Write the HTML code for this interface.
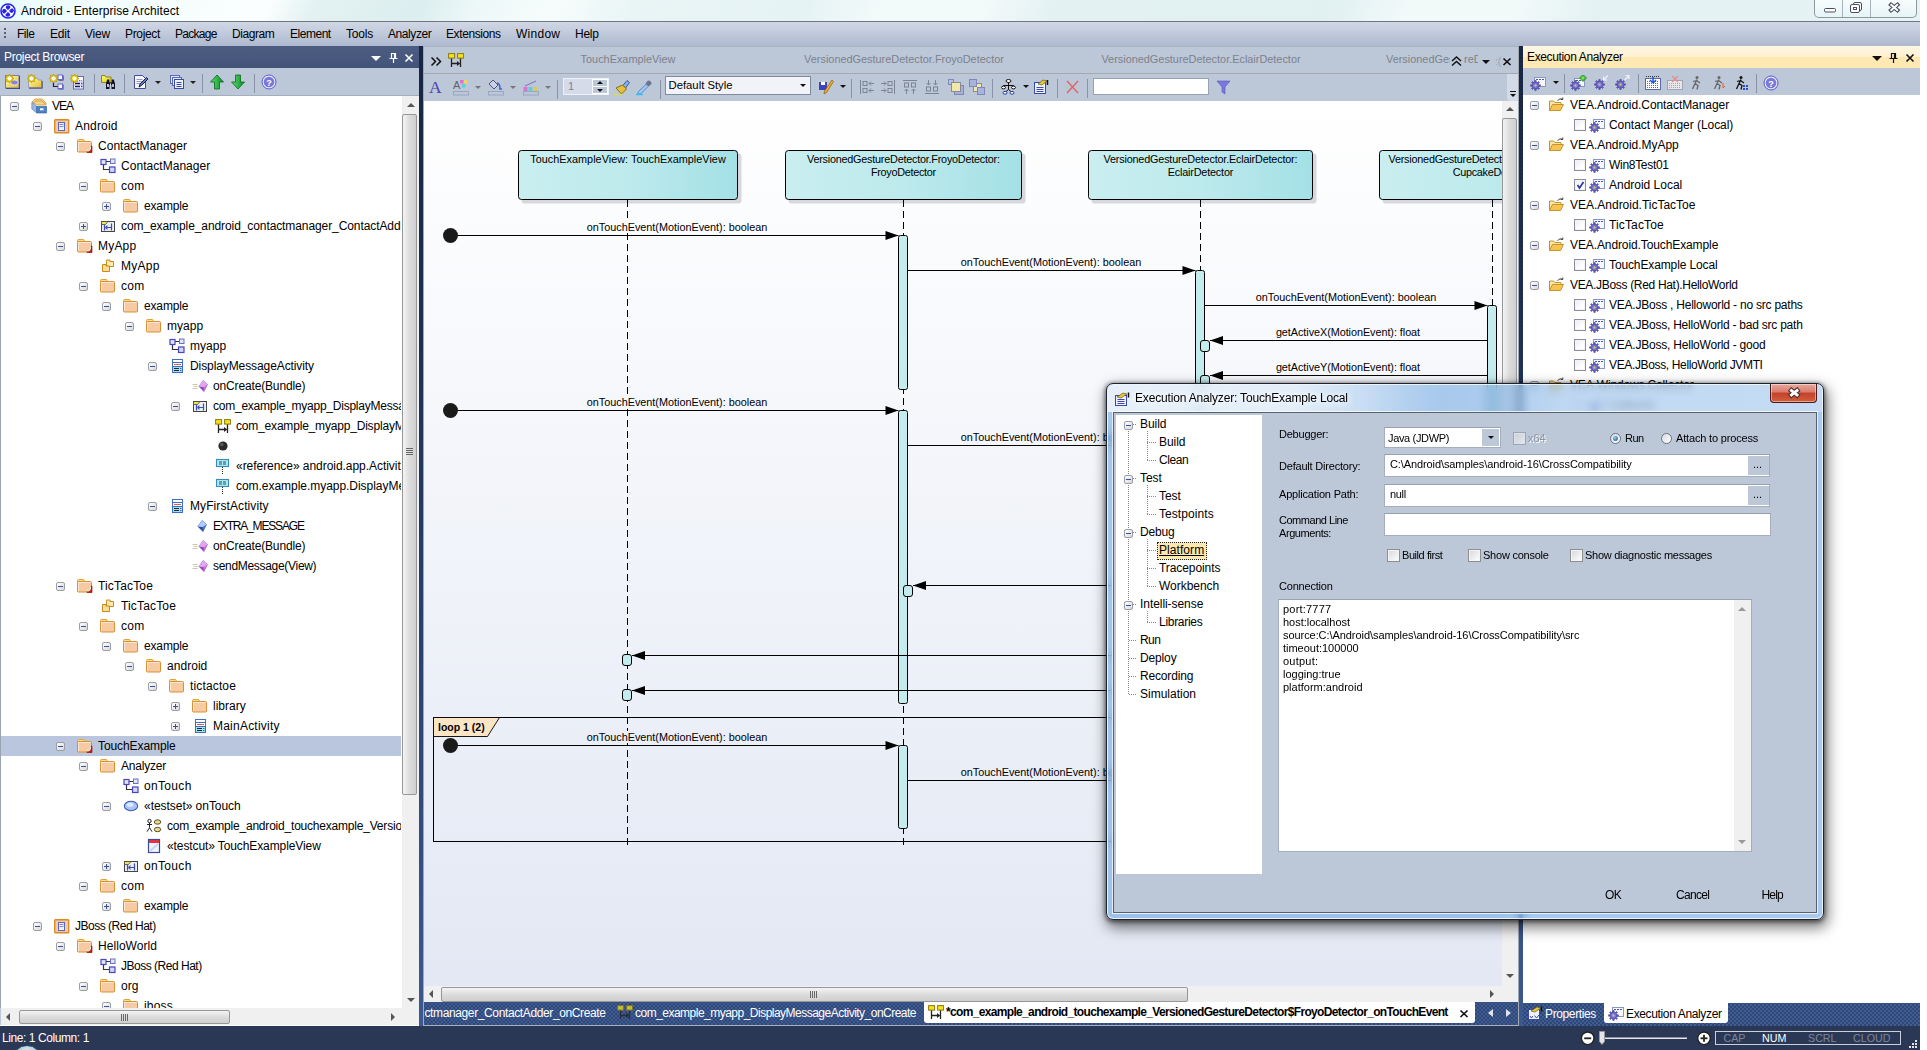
<!DOCTYPE html>
<html><head><meta charset="utf-8"><title>Android - Enterprise Architect</title>
<style>
*{box-sizing:border-box;margin:0;padding:0}
html,body{width:1927px;height:1050px;overflow:hidden;background:#fff}
body{font-family:"Liberation Sans",sans-serif;font-size:12px;color:#000}
#app{position:absolute;left:0;top:0;width:1920px;height:1050px;overflow:hidden;background:#bcc7d8}
.abs{position:absolute}
svg{display:block}
/* title */
#title{position:absolute;left:0;top:0;width:1920px;height:22px;border-bottom:1px solid #6f7680;
 background:linear-gradient(115deg,#e9fbfc 0,#f3fdfd 6%,#fbfefe 14%,#e3f1f2 16.500%,#dceeef 22%,#eef8f8 25%,#f6fcfc 29%,#e9f5f5 33%,#e6f3f4 42%,#f3fafa 46%,#f3fafa 51%,#e3f1f2 55%,#e1f0f1 69%,#f1f9f9 73%,#f1f9f9 79%,#e4f2f3 83%,#e6f3f4 100%)}
#title .appicon{position:absolute;left:0;top:3px;width:16px;height:16px}
#title .ttext{position:absolute;left:21px;top:4px;font-size:12px;line-height:15px;white-space:nowrap;letter-spacing:.07px}
.winbtns{position:absolute;left:1814px;top:-1px;height:19px;width:103px;border:1px solid #8f979f;border-top:0;border-radius:0 0 5px 5px;background:linear-gradient(#f8fdfd,#e6f4f6);display:flex}
.wb{height:18px;border-right:1px solid #a9b0b8;position:relative;display:block}
/* menu */
#menu{position:absolute;left:0;top:22px;width:1920px;height:24px;background:linear-gradient(#d0d7e5 0,#c3ccdd 40%,#aeb9cf 100%)}
#menu .mi{position:absolute;top:5px;font-size:12px;line-height:14px;white-space:nowrap}
#menu .grip{position:absolute;left:4px;top:6px;width:2px;height:11px;background:repeating-linear-gradient(#5a6070 0 2px,transparent 2px 4px)}
/* generic */
.tb{position:absolute;background:#bcc7d8}
.tree{position:absolute;background:#fff;overflow:hidden}
.row{position:absolute;left:0;height:20px;white-space:nowrap}
.row .t{position:absolute;top:2px;line-height:16px;font-size:12px;white-space:nowrap}
.row .ic{position:absolute;top:2px;width:16px;height:16px}
.exp{position:absolute;top:6px;width:9px;height:9px;border:1px solid #9a9ea6;border-radius:2px;background:linear-gradient(135deg,#fff,#d8d8d8)}
.exp:before{content:"";position:absolute;left:1px;top:3px;width:5px;height:1px;background:#3b4fa0}
.exp.p:after{content:"";position:absolute;left:3px;top:1px;width:1px;height:5px;background:#3b4fa0}
.split{position:absolute;background-color:#1f3052;background-image:radial-gradient(rgba(70,104,160,.5) .5px,transparent .75px),radial-gradient(rgba(70,104,160,.5) .5px,transparent .75px),linear-gradient(#16233f 0,#1c2d50 30%,#2a4270 65%,#3c598e 100%);background-size:4px 4px,4px 4px,100% 100%;background-position:0 0,2px 2px,0 0}
/* status */
#status{position:absolute;left:0;top:1026px;width:1920px;height:24px;overflow:hidden;background:#2a3856;color:#fff}
#status .sttext{position:absolute;left:2px;top:5px;font-size:12px;line-height:14px;white-space:nowrap}
.zoomctl{position:absolute;left:1578px;top:1px;width:130px;height:22px}
.kbd{position:absolute;left:1715px;top:5px;width:186px;height:14px;border:1px solid #c8d0e0;color:#7d8699;font-size:10.7px}
.kbd span{position:absolute;top:0;line-height:12px}
.sizegrip{position:absolute;left:1909px;top:14px;width:8px;height:8px;background:linear-gradient(#e4e4e4,#e4e4e4) 6px 0/2px 2px no-repeat,linear-gradient(#e4e4e4,#e4e4e4) 3px 3px/2px 2px no-repeat,linear-gradient(#e4e4e4,#e4e4e4) 6px 3px/2px 2px no-repeat,linear-gradient(#e4e4e4,#e4e4e4) 0 6px/2px 2px no-repeat,linear-gradient(#e4e4e4,#e4e4e4) 3px 6px/2px 2px no-repeat,linear-gradient(#e4e4e4,#e4e4e4) 6px 6px/2px 2px no-repeat}
/* scrollbars */
.sbv{position:absolute;width:17px;background:#f0f0f0}
.sbh{position:absolute;height:17px;background:#f0f0f0}
.thumb{position:absolute;border:1px solid #979797;border-radius:2px}
.thumb.v{background:linear-gradient(90deg,#f4f4f4,#dcdcdc 50%,#cfcfcf)}
.thumb.h{background:linear-gradient(#f4f4f4,#dcdcdc 50%,#cfcfcf)}
.arr{position:absolute;width:0;height:0;border:4px solid transparent}
.arr.u{border-bottom:4px solid #555;border-top:0}
.arr.d{border-top:4px solid #555;border-bottom:0}
.arr.l{border-right:4px solid #555;border-left:0}
.arr.r{border-left:4px solid #555;border-right:0}
.tabbar{background-color:#405d92;background-image:radial-gradient(#223666 .6px,transparent .85px),radial-gradient(#223666 .6px,transparent .85px);background-size:4px 4px;background-position:0 0,2px 2px}
.cb{position:absolute;top:4px;width:13px;height:13px;border:1px solid #8e8f8f;background:linear-gradient(135deg,#d4d8dc,#fff);box-shadow:inset 0 0 0 1px #f4f4f4}
.dl{font-size:11px;line-height:13px;white-space:nowrap}
.dt{font-size:12px;line-height:14px;white-space:nowrap}
.inp{background:#fff;border:1px solid #a6aebb;border-top-color:#97a1b1}
.hdot{height:1px;background:repeating-linear-gradient(90deg,#888 0 1px,transparent 1px 2px)}
.vdot{width:1px;background:repeating-linear-gradient(#888 0 1px,transparent 1px 2px)}
.dframe{border-radius:7px;border:1px solid #1c232d;background:rgba(110,166,226,.6);-webkit-backdrop-filter:blur(4px);backdrop-filter:blur(4px);box-shadow:0 0 0 1px rgba(255,255,255,.8) inset,0 1px 4px 1px rgba(0,0,0,.5),2px 6px 14px 2px rgba(0,0,0,.5)}
.dtitle{background:linear-gradient(90deg,rgba(255,255,255,.3) 0,rgba(255,255,255,.22) 30%,rgba(255,255,255,.05) 42%,rgba(255,255,255,.08) 55%,rgba(255,255,255,.3) 66%,rgba(255,255,255,.32) 100%);border-radius:5px 5px 0 0}
.dglow{background:linear-gradient(90deg,rgba(255,255,255,.62) 0,rgba(255,255,255,.6) 55%,rgba(255,255,255,0) 100%);border-radius:5px 0 0 0}
.dclose{border:1px solid #4a1a1a;border-top:0;border-radius:0 0 4px 4px;background:linear-gradient(#e9a99c 0,#d97b6c 45%,#c4402a 50%,#d2603c 100%);box-shadow:inset 0 0 0 1px rgba(255,255,255,.45)}

</style></head><body><div id="app">
<svg width="0" height="0" style="position:absolute"><defs><linearGradient id="yg" x1="0" y1="0" x2="1" y2="1"><stop offset="0" stop-color="#fffbd0"/><stop offset="1" stop-color="#e4c010"/></linearGradient><linearGradient id="yg2" x1="0" y1="0" x2="1" y2="1"><stop offset="0" stop-color="#fff870"/><stop offset="1" stop-color="#d8d020"/></linearGradient><linearGradient id="gg" x1="0" y1="0" x2="1" y2="0"><stop offset="0" stop-color="#5ae06a"/><stop offset="1" stop-color="#0a8a2a"/></linearGradient></defs></svg>
<div id="title"><div class="appicon"><svg width="16" height="16" viewBox="0 0 16 16"><circle cx="8" cy="8" r="7" fill="#fff" stroke="#2822ee" stroke-width="1.600"/><circle cx="8.100" cy="4.700" r="2.450" fill="#2822ee"/><circle cx="11.400" cy="7.600" r="2.450" fill="#2822ee"/><circle cx="4.600" cy="8.300" r="2.450" fill="#2822ee"/><circle cx="7.800" cy="11.400" r="2.450" fill="#2822ee"/><path d="M4.500 4.500 l7 7 M11.500 4.500 l-7 7" stroke="#fff" stroke-width="1.100"/></svg></div><span class="ttext">Android - Enterprise Architect</span>
<div class="winbtns"><span class="wb" style="width:28px"><svg width="28" height="18" viewBox="0 0 28 18"><rect x="9.500" y="9.500" width="11" height="3.500" rx="1.200" fill="#fff" stroke="#4a5060"/></svg></span><span class="wb" style="width:28px"><svg width="27" height="18" viewBox="0 0 27 18"><rect x="10.500" y="3.500" width="8" height="8" rx="1.500" fill="#fff" stroke="#4a5060"/><rect x="7.500" y="5.500" width="9" height="8" rx="1.500" fill="#fff" stroke="#4a5060"/><rect x="10.500" y="8.500" width="3" height="2" fill="none" stroke="#4a5060"/></svg></span><span class="wb" style="width:46px;border-right:0"><svg width="47" height="18" viewBox="0 0 47 18"><path d="M18.500 4.500 L28 12.500 M28 4.500 L18.500 12.500" fill="none" stroke="#4a5060" stroke-width="4.200"/><path d="M19.500 5.300 L27 11.700 M27 5.300 L19.500 11.700" fill="none" stroke="#fff" stroke-width="2"/></svg></span></div></div>
<div id="menu"><span class="grip"></span><span class="mi" style="left:17px;letter-spacing:-0.509px">File</span><span class="mi" style="left:50px;letter-spacing:-0.169px">Edit</span><span class="mi" style="left:85px;letter-spacing:-0.198px">View</span><span class="mi" style="left:125px;letter-spacing:-0.335px">Project</span><span class="mi" style="left:175px;letter-spacing:-0.714px">Package</span><span class="mi" style="left:232px;letter-spacing:-0.435px">Diagram</span><span class="mi" style="left:290px;letter-spacing:-0.475px">Element</span><span class="mi" style="left:346px;letter-spacing:-0.203px">Tools</span><span class="mi" style="left:388px;letter-spacing:-0.423px">Analyzer</span><span class="mi" style="left:446px;letter-spacing:-0.4px">Extensions</span><span class="mi" style="left:516px;letter-spacing:0.27px">Window</span><span class="mi" style="left:575px;letter-spacing:-0.245px">Help</span></div>

<div id="lp" class="abs" style="left:0;top:46px;width:419px;height:980px;background:#bcc7d8">
 <div class="abs" style="left:0;top:0;width:419px;height:22px;background:linear-gradient(#4d5d82,#43547a);color:#fff"><span class="abs" style="left:4px;top:4px;line-height:14px;letter-spacing:-.3px">Project Browser</span>
  <span class="abs" style="left:371px;top:10px;border:5px solid transparent;border-top:5px solid #fff;border-bottom:0"></span>
  <span class="abs" style="left:388.500px;top:5.500px"><svg width="9" height="12" viewBox="0 0 9 12"><path d="M2.500 1.500 h4 v5 h-4 z M5.500 1.500 v5 M.5 6.500 h8 M4.500 6.500 v4.500" fill="none" stroke="#fff" stroke-width="1.200"/></svg></span><span class="abs" style="left:403.500px;top:6.500px"><svg width="10" height="10" viewBox="0 0 10 10"><path d="M1.500 1.500 l7 7 M8.500 1.500 l-7 7" stroke="#fff" stroke-width="1.600"/></svg></span></div>
 <div class="abs" style="left:0;top:22px;width:419px;height:28px;border-bottom:1px solid #a3aebf"><span class="abs" style="left:5px;top:6px;width:16px;height:16px"><svg width="16" height="16" viewBox="0 0 16 16"><rect x="1" y="2" width="14" height="13" fill="#1a1a5a"/><rect x=".5" y="1.500" width="13.500" height="12.500" fill="url(#yg)" stroke="#7a74c0"/><ellipse cx="9.500" cy="8.500" rx="3.800" ry="2.500" fill="#8a84d8" stroke="#e8e8ff" stroke-width=".8"/><path d="M4.500 0 l1 2.100 l2.200 -.8 l-.8 2.200 l2.100 1 l-2.100 1 l.8 2.200 l-2.200 -.8 l-1 2.100 l-1 -2.100 l-2.200 .8 l.8 -2.200 l-2.100 -1 l2.100 -1 l-.8 -2.200 l2.200 .8 z" fill="#f4dc10" stroke="#b89800" stroke-width=".8"/><circle cx="4.500" cy="4.500" r="2" fill="#fffde8"/></svg></span><span class="abs" style="left:27px;top:6px;width:16px;height:16px"><svg width="16" height="16" viewBox="0 0 16 16"><path d="M2 14.500 v-7 h5.500 v-2.500 h3 l1.500 2 h3.500 v7.500 z" fill="#1a1a5a"/><path d="M1.500 13.500 v-7 h5.500 v-2.500 h3 l1.500 2 h3 v7.500 z" fill="url(#yg)" stroke="#8a84c0" stroke-width=".7"/><path d="M4.500 0 l1 2.100 l2.200 -.8 l-.8 2.200 l2.100 1 l-2.100 1 l.8 2.200 l-2.200 -.8 l-1 2.100 l-1 -2.100 l-2.200 .8 l.8 -2.200 l-2.100 -1 l2.100 -1 l-.8 -2.200 l2.200 .8 z" fill="#f4dc10" stroke="#b89800" stroke-width=".8"/><circle cx="4.500" cy="4.500" r="2" fill="#fffde8"/></svg></span><span class="abs" style="left:49px;top:6px;width:16px;height:16px"><svg width="16" height="16" viewBox="0 0 16 16"><path d="M4.500 8 v4.500 h6" fill="none" stroke="#1a1a5a" stroke-width="1.200"/><rect x="9.500" y="1.500" width="5" height="5" fill="#1a1a5a"/><rect x="9" y="1" width="4.500" height="4.500" fill="#f4f8ff" stroke="#6a68c8"/><rect x="9.500" y="10.500" width="5" height="5" fill="#2a3ac0"/><rect x="9" y="10" width="4.500" height="4.500" fill="#f4f8ff" stroke="#6a68c8"/><path d="M4.500 0 l1 2.100 l2.200 -.8 l-.8 2.200 l2.100 1 l-2.100 1 l.8 2.200 l-2.200 -.8 l-1 2.100 l-1 -2.100 l-2.200 .8 l.8 -2.200 l-2.100 -1 l2.100 -1 l-.8 -2.200 l2.200 .8 z" fill="#f4dc10" stroke="#b89800" stroke-width=".8"/><circle cx="4.500" cy="4.500" r="2" fill="#fffde8"/></svg></span><span class="abs" style="left:70px;top:6px;width:16px;height:16px"><svg width="16" height="16" viewBox="0 0 16 16"><rect x="3.500" y="2.500" width="10" height="12.500" fill="#f8f8ff" stroke="#6a68c0"/><path d="M9 6.500 h3.500" stroke="#3a68e0" stroke-width="1.200" stroke-dasharray="1 .7"/><path d="M5 9.500 h5 M5 12.500 h5" stroke="#1a1a5a" stroke-width="1.500"/><path d="M11 9.500 h1.500 M11 12.500 h1.500" stroke="#3a48c0" stroke-width="1.500"/><path d="M4 8 h9 M4 11 h9" stroke="#9a98d0" stroke-width=".6"/><path d="M4.500 0 l1 2.100 l2.200 -.8 l-.8 2.200 l2.100 1 l-2.100 1 l.8 2.200 l-2.200 -.8 l-1 2.100 l-1 -2.100 l-2.200 .8 l.8 -2.200 l-2.100 -1 l2.100 -1 l-.8 -2.200 l2.200 .8 z" fill="#f4dc10" stroke="#b89800" stroke-width=".8"/><circle cx="4.500" cy="4.500" r="2" fill="#fffde8"/></svg></span><span class="abs" style="left:94px;top:6px;width:1px;height:19px;background:#8a93a6"></span><span class="abs" style="left:101px;top:6px;width:16px;height:16px"><svg width="16" height="16" viewBox="0 0 16 16"><path d="M.5 8.500 v-7 h3.500 l1 1.500 h5 v5.500 z" fill="url(#yg2)" stroke="#8a8420"/><path d="M5 15 v-5.500 l1.200 -4 h2 l.3 3 h2 l.3 -3 h2 l1.200 4 v5.500 h-3.500 v-4 h-2 v4 z" fill="#12122a"/><path d="M6.200 10 h1.600 v3 h-1.600 z M11.200 10 h1.600 v3 h-1.600 z M9 9.500 h1 v1.500 h-1 z" fill="#e8e8f8"/></svg></span><span class="abs" style="left:124px;top:6px;width:1px;height:19px;background:#8a93a6"></span><span class="abs" style="left:133px;top:6px;width:16px;height:16px"><svg width="16" height="16" viewBox="0 0 16 16"><path d="M1.500 1.500 h8 l3 3 v10 h-11 z" fill="#f4f6ff" stroke="#4a4a98"/><path d="M3.500 5.500 h6 M3.500 7.500 h6 M3.500 9.500 h4" stroke="#7a80b8" stroke-width=".8"/><path d="M6 13 l1 -3 l6.500 -6.500 l1.500 1.500 l-6.500 6.500 z" fill="#5a78d8" stroke="#223"/></svg></span><span class="abs" style="left:155px;top:13px;border:3px solid transparent;border-top:3px solid #222;border-bottom:0"></span><span class="abs" style="left:169px;top:6px;width:16px;height:16px"><svg width="16" height="16" viewBox="0 0 16 16"><rect x="1.500" y="1.500" width="9" height="8" fill="#dfe6fa" stroke="#5a68b8"/><rect x="3.500" y="3.500" width="9" height="8" fill="#dfe6fa" stroke="#5a68b8"/><rect x="5.500" y="5.500" width="9" height="9" fill="#eef2ff" stroke="#3a48a8"/><path d="M7.500 8.500 h5 M7.500 10.500 h5 M7.500 12.500 h5" stroke="#3a48a8"/></svg></span><span class="abs" style="left:190px;top:13px;border:3px solid transparent;border-top:3px solid #222;border-bottom:0"></span><span class="abs" style="left:202px;top:6px;width:1px;height:19px;background:#8a93a6"></span><span class="abs" style="left:209px;top:6px;width:16px;height:16px"><svg width="16" height="16" viewBox="0 0 16 16"><path d="M8 1 l6.500 7 h-4 v7 h-5 v-7 h-4 z" fill="url(#gg)" stroke="#0a6a1a" stroke-width=".8"/></svg></span><span class="abs" style="left:230px;top:6px;width:16px;height:16px"><svg width="16" height="16" viewBox="0 0 16 16"><path d="M8 15 l6.500 -7 h-4 v-7 h-5 v7 h-4 z" fill="url(#gg)" stroke="#0a6a1a" stroke-width=".8"/></svg></span><span class="abs" style="left:254px;top:6px;width:1px;height:19px;background:#8a93a6"></span><span class="abs" style="left:261px;top:6px;width:16px;height:16px"><svg width="16" height="16" viewBox="0 0 16 16"><circle cx="8" cy="8" r="7" fill="#e8e8fc" stroke="#5a58d0" stroke-width="1"/><circle cx="8" cy="8" r="5.300" fill="#7a78d8"/><text x="8" y="11.500" font-size="9" font-weight="bold" text-anchor="middle" fill="#fff" font-family="Liberation Sans,sans-serif">?</text></svg></span></div>
 <div class="tree" style="left:0;top:50px;width:402px;height:912px;border-left:1px solid #9aa3b2"><div class="abs" style="left:0;top:0;width:400px;height:912px;overflow:hidden"><div class="row" style="top:0px;width:401px"><span class="exp" style="left:9px"></span><span class="ic" style="left:30px"><svg width="16" height="16" viewBox="0 0 16 16"><path d="M1 4 l3 -3 h7 l4 4 v2 h-9 z" fill="#f4d48a" stroke="#c99a3a" stroke-width=".8"/><path d="M2 5.500 l3 -2.500 h6 l3 3" fill="none" stroke="#c99a3a" stroke-width=".8"/><path d="M.8 4.500 l5 4 v6.500 l-5 -4 z" fill="#9db8dc" stroke="#4a78b8" stroke-width=".6"/><rect x="5.800" y="8.500" width="9.700" height="6.500" fill="#4a82c8" stroke="#2a5aa0" stroke-width=".6"/><rect x="9" y="10.300" width="3.500" height="2" fill="#fff"/></svg></span><span class="t" style="left:51px;letter-spacing:-1.004px">VEA</span></div><div class="row" style="top:20px;width:401px"><span class="exp" style="left:32px"></span><span class="ic" style="left:53px"><svg width="16" height="16" viewBox="0 0 16 16"><rect x=".7" y="1.700" width="14" height="13" rx=".8" fill="#f7c9a6" stroke="#d98a2b" stroke-width="1.400"/><rect x="4.500" y="4.500" width="6" height="8" fill="#eef0fa" stroke="#5a68b8"/><path d="M5.500 6.500 h4 M5.500 8.500 h4" stroke="#7a88c8"/></svg></span><span class="t" style="left:74px;letter-spacing:0.191px">Android</span></div><div class="row" style="top:40px;width:401px"><span class="exp" style="left:55px"></span><span class="ic" style="left:76px"><svg width="16" height="16" viewBox="0 0 16 16"><path d="M.5 4 v-1.500 q0 -1 1 -1 h4.500 q1 0 1.300 1 l.4 1.500 z" fill="#fbe08a" stroke="#d9a441"/><rect x=".5" y="3.500" width="14" height="10.500" rx="1" fill="#f6cba4" stroke="#d98f32"/><path d="M1.500 4.500 h12 M1.500 4.500 v8.500" stroke="#fbe6d2" fill="none"/><path d="M10 14.500 h5 v-6.500 h-1 v3 q0 2.500 -2.500 2.500 h-1.500 z" fill="#e01818" stroke="#8a0000" stroke-width=".6"/><path d="M10 13 q3.700 .2 3.700 -4.500" fill="none" stroke="#fff" stroke-width=".9"/></svg></span><span class="t" style="left:97px;letter-spacing:0.02px">ContactManager</span></div><div class="row" style="top:60px;width:401px"><span class="ic" style="left:99px"><svg width="16" height="16" viewBox="0 0 16 16"><path d="M3.500 6 v5.500 h6 M6 3.500 h5" fill="none" stroke="#333" stroke-width="1.200"/><rect x="1" y="1.500" width="5" height="5" fill="#dfe6fa" stroke="#4a44c0" stroke-width="1.200"/><rect x="10.500" y="1" width="4.500" height="4.500" fill="#dfe6fa" stroke="#6a70c0"/><rect x="9.500" y="9" width="5.500" height="5.500" fill="#cfd8f6" stroke="#4a44c0" stroke-width="1.200"/></svg></span><span class="t" style="left:120px;letter-spacing:0.042px">ContactManager</span></div><div class="row" style="top:80px;width:401px"><span class="exp" style="left:78px"></span><span class="ic" style="left:99px"><svg width="16" height="16" viewBox="0 0 16 16"><path d="M.5 4 v-1.500 q0 -1 1 -1 h4.500 q1 0 1.300 1 l.4 1.500 z" fill="#fbe08a" stroke="#d9a441"/><rect x=".5" y="3.500" width="14" height="10.500" rx="1" fill="#f6cba4" stroke="#d98f32"/><path d="M1.500 4.500 h12 M1.500 4.500 v8.500" stroke="#fbe6d2" fill="none"/></svg></span><span class="t" style="left:120px;letter-spacing:0.343px">com</span></div><div class="row" style="top:100px;width:401px"><span class="exp p" style="left:101px"></span><span class="ic" style="left:122px"><svg width="16" height="16" viewBox="0 0 16 16"><path d="M.5 4 v-1.500 q0 -1 1 -1 h4.500 q1 0 1.300 1 l.4 1.500 z" fill="#fbe08a" stroke="#d9a441"/><rect x=".5" y="3.500" width="14" height="10.500" rx="1" fill="#f6cba4" stroke="#d98f32"/><path d="M1.500 4.500 h12 M1.500 4.500 v8.500" stroke="#fbe6d2" fill="none"/></svg></span><span class="t" style="left:143px;letter-spacing:-0.151px">example</span></div><div class="row" style="top:120px;width:401px"><span class="exp p" style="left:78px"></span><span class="ic" style="left:99px"><svg width="16" height="16" viewBox="0 0 16 16"><rect x="1.500" y="3.500" width="13" height="10" fill="#eceef2" stroke="#444"/><path d="M1.500 3.500 h6.500 l-2.500 3 h-4 z" fill="#f0e45a" stroke="#444" stroke-width=".8"/><path d="M4.500 7 v5.500 M11.500 5.500 v7" stroke="#3a50b0" stroke-width="1.200"/><path d="M11 9.500 h-5.500 m0 0 l2 -1.800 m-2 1.800 l2 1.800" stroke="#3a50b0" fill="none" stroke-width="1.100"/></svg></span><span class="t" style="left:120px;letter-spacing:-0.089px">com_example_android_contactmanager_ContactAdd</span></div><div class="row" style="top:140px;width:401px"><span class="exp" style="left:55px"></span><span class="ic" style="left:76px"><svg width="16" height="16" viewBox="0 0 16 16"><path d="M.5 4 v-1.500 q0 -1 1 -1 h4.500 q1 0 1.300 1 l.4 1.500 z" fill="#fbe08a" stroke="#d9a441"/><rect x=".5" y="3.500" width="14" height="10.500" rx="1" fill="#f6cba4" stroke="#d98f32"/><path d="M1.500 4.500 h12 M1.500 4.500 v8.500" stroke="#fbe6d2" fill="none"/><path d="M10 14.500 h5 v-6.500 h-1 v3 q0 2.500 -2.500 2.500 h-1.500 z" fill="#e01818" stroke="#8a0000" stroke-width=".6"/><path d="M10 13 q3.700 .2 3.700 -4.500" fill="none" stroke="#fff" stroke-width=".9"/></svg></span><span class="t" style="left:97px;letter-spacing:0.19px">MyApp</span></div><div class="row" style="top:160px;width:401px"><span class="ic" style="left:99px"><svg width="16" height="16" viewBox="0 0 16 16"><path d="M6.500 3.500 v-1.500 h3.500 v1.500 h3.500 v5 h-7 z" fill="#fbe9b0" stroke="#c98a1a"/><path d="M2.500 8 v-1.500 h3.500 v1.500 h3.500 v5.500 h-7 z" fill="#f9dc98" stroke="#c98a1a"/></svg></span><span class="t" style="left:120px;letter-spacing:0.27px">MyApp</span></div><div class="row" style="top:180px;width:401px"><span class="exp" style="left:78px"></span><span class="ic" style="left:99px"><svg width="16" height="16" viewBox="0 0 16 16"><path d="M.5 4 v-1.500 q0 -1 1 -1 h4.500 q1 0 1.300 1 l.4 1.500 z" fill="#fbe08a" stroke="#d9a441"/><rect x=".5" y="3.500" width="14" height="10.500" rx="1" fill="#f6cba4" stroke="#d98f32"/><path d="M1.500 4.500 h12 M1.500 4.500 v8.500" stroke="#fbe6d2" fill="none"/></svg></span><span class="t" style="left:120px;letter-spacing:0.343px">com</span></div><div class="row" style="top:200px;width:401px"><span class="exp" style="left:101px"></span><span class="ic" style="left:122px"><svg width="16" height="16" viewBox="0 0 16 16"><path d="M.5 4 v-1.500 q0 -1 1 -1 h4.500 q1 0 1.300 1 l.4 1.500 z" fill="#fbe08a" stroke="#d9a441"/><rect x=".5" y="3.500" width="14" height="10.500" rx="1" fill="#f6cba4" stroke="#d98f32"/><path d="M1.500 4.500 h12 M1.500 4.500 v8.500" stroke="#fbe6d2" fill="none"/></svg></span><span class="t" style="left:143px;letter-spacing:-0.151px">example</span></div><div class="row" style="top:220px;width:401px"><span class="exp" style="left:124px"></span><span class="ic" style="left:145px"><svg width="16" height="16" viewBox="0 0 16 16"><path d="M.5 4 v-1.500 q0 -1 1 -1 h4.500 q1 0 1.300 1 l.4 1.500 z" fill="#fbe08a" stroke="#d9a441"/><rect x=".5" y="3.500" width="14" height="10.500" rx="1" fill="#f6cba4" stroke="#d98f32"/><path d="M1.500 4.500 h12 M1.500 4.500 v8.500" stroke="#fbe6d2" fill="none"/></svg></span><span class="t" style="left:166px;letter-spacing:0.056px">myapp</span></div><div class="row" style="top:240px;width:401px"><span class="ic" style="left:168px"><svg width="16" height="16" viewBox="0 0 16 16"><path d="M3.500 6 v5.500 h6 M6 3.500 h5" fill="none" stroke="#333" stroke-width="1.200"/><rect x="1" y="1.500" width="5" height="5" fill="#dfe6fa" stroke="#4a44c0" stroke-width="1.200"/><rect x="10.500" y="1" width="4.500" height="4.500" fill="#dfe6fa" stroke="#6a70c0"/><rect x="9.500" y="9" width="5.500" height="5.500" fill="#cfd8f6" stroke="#4a44c0" stroke-width="1.200"/></svg></span><span class="t" style="left:189px;letter-spacing:0.056px">myapp</span></div><div class="row" style="top:260px;width:401px"><span class="exp" style="left:147px"></span><span class="ic" style="left:168px"><svg width="16" height="16" viewBox="0 0 16 16"><rect x="3.500" y="1.500" width="10" height="13" fill="#fff" stroke="#3f6cc4"/><rect x="4" y="9" width="9" height="5" fill="#9fe6e8"/><path d="M3.500 4.500 h10 M3.500 8.500 h10" stroke="#3f6cc4"/><path d="M5 6.500 h7" stroke="#e05a5a"/><path d="M5 10.500 h5 M5 12.500 h5" stroke="#223" /><path d="M11 10.500 h1.500 M11 12.500 h1.500" stroke="#3f6cc4"/></svg></span><span class="t" style="left:189px;letter-spacing:-0.093px">DisplayMessageActivity</span></div><div class="row" style="top:280px;width:401px"><span class="ic" style="left:191px"><svg width="16" height="16" viewBox="0 0 16 16"><path d="M.5 6.500 h5 M1.500 8.500 h4 M.5 10.500 h5" stroke="#c8c0a0" stroke-width=".9"/><path d="M11 2.500 l4.500 4 l-3.500 7 l-5 -5 z" fill="#c878e0" stroke="#a050c0" stroke-width=".6"/><path d="M7 8.500 l5 5 l-.5 -4.500 z" fill="#9a48b8"/><path d="M11 2.500 l4.500 4 l-4 2.500 l-4.500 -.5 z" fill="#e0a8f0"/></svg></span><span class="t" style="left:212px;letter-spacing:-0.151px">onCreate(Bundle)</span></div><div class="row" style="top:300px;width:401px"><span class="exp" style="left:170px"></span><span class="ic" style="left:191px"><svg width="16" height="16" viewBox="0 0 16 16"><rect x="1.500" y="3.500" width="13" height="10" fill="#eceef2" stroke="#444"/><path d="M1.500 3.500 h6.500 l-2.500 3 h-4 z" fill="#f0e45a" stroke="#444" stroke-width=".8"/><path d="M4.500 7 v5.500 M11.500 5.500 v7" stroke="#3a50b0" stroke-width="1.200"/><path d="M11 9.500 h-5.500 m0 0 l2 -1.800 m-2 1.800 l2 1.800" stroke="#3a50b0" fill="none" stroke-width="1.100"/></svg></span><span class="t" style="left:212px;letter-spacing:-0.237px">com_example_myapp_DisplayMessageActivity</span></div><div class="row" style="top:320px;width:401px"><span class="ic" style="left:214px"><svg width="16" height="16" viewBox="0 0 16 16"><path d="M3.500 6 v9 M12.500 6 v9 M3.500 11.500 h8" fill="none" stroke="#222" stroke-width="1.300"/><path d="M12 11.500 l-3 -2.500 v5 z" fill="#222"/><rect x=".6" y="1.600" width="6" height="4.500" fill="#f4e21a" stroke="#8a7a10"/><rect x="9.600" y="1.600" width="6" height="4.500" fill="#f4e21a" stroke="#8a7a10"/></svg></span><span class="t" style="left:235px;letter-spacing:-0.189px">com_example_myapp_DisplayMessageActivity</span></div><div class="row" style="top:340px;width:401px"><span class="ic" style="left:214px"><svg width="16" height="16" viewBox="0 0 16 16"><circle cx="8" cy="8" r="4.600" fill="#2a2a2a"/><circle cx="6.800" cy="6.600" r="1.800" fill="#5a5a5a"/></svg></span><span class="t" style="left:235px;letter-spacing:-0.15px"></span></div><div class="row" style="top:360px;width:401px"><span class="ic" style="left:214px"><svg width="16" height="16" viewBox="0 0 16 16"><rect x="1.500" y="1.500" width="12" height="7" fill="#a8eef2" stroke="#3a88c0" stroke-width="1.100"/><path d="M4 4 h7 M4 6 h7" stroke="#234" stroke-width=".9" stroke-dasharray="3 1"/><path d="M7.500 9 v7" stroke="#333" stroke-dasharray="1 1"/></svg></span><span class="t" style="left:235px;letter-spacing:-0.045px">«reference» android.app.Activity</span></div><div class="row" style="top:380px;width:401px"><span class="ic" style="left:214px"><svg width="16" height="16" viewBox="0 0 16 16"><rect x="1.500" y="1.500" width="12" height="7" fill="#a8eef2" stroke="#3a88c0" stroke-width="1.100"/><path d="M4 4 h7 M4 6 h7" stroke="#234" stroke-width=".9" stroke-dasharray="3 1"/><path d="M7.500 9 v7" stroke="#333" stroke-dasharray="1 1"/></svg></span><span class="t" style="left:235px;letter-spacing:-0.038px">com.example.myapp.DisplayMessageActivity</span></div><div class="row" style="top:400px;width:401px"><span class="exp" style="left:147px"></span><span class="ic" style="left:168px"><svg width="16" height="16" viewBox="0 0 16 16"><rect x="3.500" y="1.500" width="10" height="13" fill="#fff" stroke="#3f6cc4"/><rect x="4" y="9" width="9" height="5" fill="#9fe6e8"/><path d="M3.500 4.500 h10 M3.500 8.500 h10" stroke="#3f6cc4"/><path d="M5 6.500 h7" stroke="#e05a5a"/><path d="M5 10.500 h5 M5 12.500 h5" stroke="#223" /><path d="M11 10.500 h1.500 M11 12.500 h1.500" stroke="#3f6cc4"/></svg></span><span class="t" style="left:189px;letter-spacing:0.092px">MyFirstActivity</span></div><div class="row" style="top:420px;width:401px"><span class="ic" style="left:191px"><svg width="16" height="16" viewBox="0 0 16 16"><path d="M10 2.500 l4.500 4 l-3.500 7 l-5 -5 z" fill="#4a78d8" stroke="#2a50a8" stroke-width=".6"/><path d="M6 8.500 l5 5 l-.5 -4.500 z" fill="#2a4a98"/><path d="M10 2.500 l4.500 4 l-4 2.500 l-4.500 -.5 z" fill="#b0ccf8"/></svg></span><span class="t" style="left:212px;letter-spacing:-1.179px">EXTRA_MESSAGE</span></div><div class="row" style="top:440px;width:401px"><span class="ic" style="left:191px"><svg width="16" height="16" viewBox="0 0 16 16"><path d="M.5 6.500 h5 M1.500 8.500 h4 M.5 10.500 h5" stroke="#c8c0a0" stroke-width=".9"/><path d="M11 2.500 l4.500 4 l-3.500 7 l-5 -5 z" fill="#c878e0" stroke="#a050c0" stroke-width=".6"/><path d="M7 8.500 l5 5 l-.5 -4.500 z" fill="#9a48b8"/><path d="M11 2.500 l4.500 4 l-4 2.500 l-4.500 -.5 z" fill="#e0a8f0"/></svg></span><span class="t" style="left:212px;letter-spacing:-0.151px">onCreate(Bundle)</span></div><div class="row" style="top:460px;width:401px"><span class="ic" style="left:191px"><svg width="16" height="16" viewBox="0 0 16 16"><path d="M.5 6.500 h5 M1.500 8.500 h4 M.5 10.500 h5" stroke="#c8c0a0" stroke-width=".9"/><path d="M11 2.500 l4.500 4 l-3.500 7 l-5 -5 z" fill="#c878e0" stroke="#a050c0" stroke-width=".6"/><path d="M7 8.500 l5 5 l-.5 -4.500 z" fill="#9a48b8"/><path d="M11 2.500 l4.500 4 l-4 2.500 l-4.500 -.5 z" fill="#e0a8f0"/></svg></span><span class="t" style="left:212px;letter-spacing:-0.306px">sendMessage(View)</span></div><div class="row" style="top:480px;width:401px"><span class="exp" style="left:55px"></span><span class="ic" style="left:76px"><svg width="16" height="16" viewBox="0 0 16 16"><path d="M.5 4 v-1.500 q0 -1 1 -1 h4.500 q1 0 1.300 1 l.4 1.500 z" fill="#fbe08a" stroke="#d9a441"/><rect x=".5" y="3.500" width="14" height="10.500" rx="1" fill="#f6cba4" stroke="#d98f32"/><path d="M1.500 4.500 h12 M1.500 4.500 v8.500" stroke="#fbe6d2" fill="none"/><path d="M10 14.500 h5 v-6.500 h-1 v3 q0 2.500 -2.500 2.500 h-1.500 z" fill="#e01818" stroke="#8a0000" stroke-width=".6"/><path d="M10 13 q3.700 .2 3.700 -4.500" fill="none" stroke="#fff" stroke-width=".9"/></svg></span><span class="t" style="left:97px;letter-spacing:0.159px">TicTacToe</span></div><div class="row" style="top:500px;width:401px"><span class="ic" style="left:99px"><svg width="16" height="16" viewBox="0 0 16 16"><path d="M6.500 3.500 v-1.500 h3.500 v1.500 h3.500 v5 h-7 z" fill="#fbe9b0" stroke="#c98a1a"/><path d="M2.500 8 v-1.500 h3.500 v1.500 h3.500 v5.500 h-7 z" fill="#f9dc98" stroke="#c98a1a"/></svg></span><span class="t" style="left:120px;letter-spacing:0.159px">TicTacToe</span></div><div class="row" style="top:520px;width:401px"><span class="exp" style="left:78px"></span><span class="ic" style="left:99px"><svg width="16" height="16" viewBox="0 0 16 16"><path d="M.5 4 v-1.500 q0 -1 1 -1 h4.500 q1 0 1.300 1 l.4 1.500 z" fill="#fbe08a" stroke="#d9a441"/><rect x=".5" y="3.500" width="14" height="10.500" rx="1" fill="#f6cba4" stroke="#d98f32"/><path d="M1.500 4.500 h12 M1.500 4.500 v8.500" stroke="#fbe6d2" fill="none"/></svg></span><span class="t" style="left:120px;letter-spacing:0.343px">com</span></div><div class="row" style="top:540px;width:401px"><span class="exp" style="left:101px"></span><span class="ic" style="left:122px"><svg width="16" height="16" viewBox="0 0 16 16"><path d="M.5 4 v-1.500 q0 -1 1 -1 h4.500 q1 0 1.300 1 l.4 1.500 z" fill="#fbe08a" stroke="#d9a441"/><rect x=".5" y="3.500" width="14" height="10.500" rx="1" fill="#f6cba4" stroke="#d98f32"/><path d="M1.500 4.500 h12 M1.500 4.500 v8.500" stroke="#fbe6d2" fill="none"/></svg></span><span class="t" style="left:143px;letter-spacing:-0.151px">example</span></div><div class="row" style="top:560px;width:401px"><span class="exp" style="left:124px"></span><span class="ic" style="left:145px"><svg width="16" height="16" viewBox="0 0 16 16"><path d="M.5 4 v-1.500 q0 -1 1 -1 h4.500 q1 0 1.300 1 l.4 1.500 z" fill="#fbe08a" stroke="#d9a441"/><rect x=".5" y="3.500" width="14" height="10.500" rx="1" fill="#f6cba4" stroke="#d98f32"/><path d="M1.500 4.500 h12 M1.500 4.500 v8.500" stroke="#fbe6d2" fill="none"/></svg></span><span class="t" style="left:166px;letter-spacing:0.038px">android</span></div><div class="row" style="top:580px;width:401px"><span class="exp" style="left:147px"></span><span class="ic" style="left:168px"><svg width="16" height="16" viewBox="0 0 16 16"><path d="M.5 4 v-1.500 q0 -1 1 -1 h4.500 q1 0 1.300 1 l.4 1.500 z" fill="#fbe08a" stroke="#d9a441"/><rect x=".5" y="3.500" width="14" height="10.500" rx="1" fill="#f6cba4" stroke="#d98f32"/><path d="M1.500 4.500 h12 M1.500 4.500 v8.500" stroke="#fbe6d2" fill="none"/></svg></span><span class="t" style="left:189px;letter-spacing:0.146px">tictactoe</span></div><div class="row" style="top:600px;width:401px"><span class="exp p" style="left:170px"></span><span class="ic" style="left:191px"><svg width="16" height="16" viewBox="0 0 16 16"><path d="M.5 4 v-1.500 q0 -1 1 -1 h4.500 q1 0 1.300 1 l.4 1.500 z" fill="#fbe08a" stroke="#d9a441"/><rect x=".5" y="3.500" width="14" height="10.500" rx="1" fill="#f6cba4" stroke="#d98f32"/><path d="M1.500 4.500 h12 M1.500 4.500 v8.500" stroke="#fbe6d2" fill="none"/></svg></span><span class="t" style="left:212px;letter-spacing:0.004px">library</span></div><div class="row" style="top:620px;width:401px"><span class="exp p" style="left:170px"></span><span class="ic" style="left:191px"><svg width="16" height="16" viewBox="0 0 16 16"><rect x="3.500" y="1.500" width="10" height="13" fill="#fff" stroke="#3f6cc4"/><rect x="4" y="9" width="9" height="5" fill="#9fe6e8"/><path d="M3.500 4.500 h10 M3.500 8.500 h10" stroke="#3f6cc4"/><path d="M5 6.500 h7" stroke="#e05a5a"/><path d="M5 10.500 h5 M5 12.500 h5" stroke="#223" /><path d="M11 10.500 h1.500 M11 12.500 h1.500" stroke="#3f6cc4"/></svg></span><span class="t" style="left:212px;letter-spacing:0.224px">MainActivity</span></div><div class="row" style="top:640px;width:401px;background:#b9c6dd"><span class="exp" style="left:55px"></span><span class="ic" style="left:76px"><svg width="16" height="16" viewBox="0 0 16 16"><path d="M.5 4 v-1.500 q0 -1 1 -1 h4.500 q1 0 1.300 1 l.4 1.500 z" fill="#fbe08a" stroke="#d9a441"/><rect x=".5" y="3.500" width="14" height="10.500" rx="1" fill="#f6cba4" stroke="#d98f32"/><path d="M1.500 4.500 h12 M1.500 4.500 v8.500" stroke="#fbe6d2" fill="none"/><path d="M10 14.500 h5 v-6.500 h-1 v3 q0 2.500 -2.500 2.500 h-1.500 z" fill="#e01818" stroke="#8a0000" stroke-width=".6"/><path d="M10 13 q3.700 .2 3.700 -4.500" fill="none" stroke="#fff" stroke-width=".9"/></svg></span><span class="t" style="left:97px;letter-spacing:-0.084px">TouchExample</span></div><div class="row" style="top:660px;width:401px"><span class="exp" style="left:78px"></span><span class="ic" style="left:99px"><svg width="16" height="16" viewBox="0 0 16 16"><path d="M.5 4 v-1.500 q0 -1 1 -1 h4.500 q1 0 1.300 1 l.4 1.500 z" fill="#fbe08a" stroke="#d9a441"/><rect x=".5" y="3.500" width="14" height="10.500" rx="1" fill="#f6cba4" stroke="#d98f32"/><path d="M1.500 4.500 h12 M1.500 4.500 v8.500" stroke="#fbe6d2" fill="none"/></svg></span><span class="t" style="left:120px;letter-spacing:-0.211px">Analyzer</span></div><div class="row" style="top:680px;width:401px"><span class="ic" style="left:122px"><svg width="16" height="16" viewBox="0 0 16 16"><path d="M3.500 6 v5.500 h6 M6 3.500 h5" fill="none" stroke="#333" stroke-width="1.200"/><rect x="1" y="1.500" width="5" height="5" fill="#dfe6fa" stroke="#4a44c0" stroke-width="1.200"/><rect x="10.500" y="1" width="4.500" height="4.500" fill="#dfe6fa" stroke="#6a70c0"/><rect x="9.500" y="9" width="5.500" height="5.500" fill="#cfd8f6" stroke="#4a44c0" stroke-width="1.200"/></svg></span><span class="t" style="left:143px;letter-spacing:0.333px">onTouch</span></div><div class="row" style="top:700px;width:401px"><span class="exp" style="left:101px"></span><span class="ic" style="left:122px"><svg width="16" height="16" viewBox="0 0 16 16"><ellipse cx="8" cy="8" rx="6.700" ry="4.700" fill="#a8c4f4" stroke="#3a5ab8" stroke-width="1.100"/><ellipse cx="7" cy="6.800" rx="3.500" ry="2" fill="#dce8fc"/></svg></span><span class="t" style="left:143px;letter-spacing:-0.041px">«testset» onTouch</span></div><div class="row" style="top:720px;width:401px"><span class="ic" style="left:145px"><svg width="16" height="16" viewBox="0 0 16 16"><circle cx="3.500" cy="3" r="1.700" fill="#fff" stroke="#222"/><path d="M3.500 4.700 v5 M1 6.500 h5 M3.500 9.700 l-2.500 4 M3.500 9.700 l2.500 4" stroke="#222" fill="none"/><ellipse cx="11.500" cy="4" rx="3.200" ry="2.200" fill="#e8d898" stroke="#5a5020"/><ellipse cx="11.500" cy="11.500" rx="3.200" ry="2.200" fill="#e8d898" stroke="#5a5020"/></svg></span><span class="t" style="left:166px;letter-spacing:-0.204px">com_example_android_touchexample_VersionedGestureDetector</span></div><div class="row" style="top:740px;width:401px"><span class="ic" style="left:145px"><svg width="16" height="16" viewBox="0 0 16 16"><rect x="2.500" y="1.500" width="11" height="13" fill="#f0f4ff" stroke="#3a4a98" stroke-width="1.200"/><rect x="3" y="2" width="10" height="3" fill="#e83040"/><path d="M4 13 l8 -7" stroke="#c8d4f4" stroke-width="2"/></svg></span><span class="t" style="left:166px;letter-spacing:-0.101px">«testcut» TouchExampleView</span></div><div class="row" style="top:760px;width:401px"><span class="exp p" style="left:101px"></span><span class="ic" style="left:122px"><svg width="16" height="16" viewBox="0 0 16 16"><rect x="1.500" y="3.500" width="13" height="10" fill="#eceef2" stroke="#444"/><path d="M1.500 3.500 h6.500 l-2.500 3 h-4 z" fill="#f0e45a" stroke="#444" stroke-width=".8"/><path d="M4.500 7 v5.500 M11.500 5.500 v7" stroke="#3a50b0" stroke-width="1.200"/><path d="M11 9.500 h-5.500 m0 0 l2 -1.800 m-2 1.800 l2 1.800" stroke="#3a50b0" fill="none" stroke-width="1.100"/></svg></span><span class="t" style="left:143px;letter-spacing:0.333px">onTouch</span></div><div class="row" style="top:780px;width:401px"><span class="exp" style="left:78px"></span><span class="ic" style="left:99px"><svg width="16" height="16" viewBox="0 0 16 16"><path d="M.5 4 v-1.500 q0 -1 1 -1 h4.500 q1 0 1.300 1 l.4 1.500 z" fill="#fbe08a" stroke="#d9a441"/><rect x=".5" y="3.500" width="14" height="10.500" rx="1" fill="#f6cba4" stroke="#d98f32"/><path d="M1.500 4.500 h12 M1.500 4.500 v8.500" stroke="#fbe6d2" fill="none"/></svg></span><span class="t" style="left:120px;letter-spacing:0.343px">com</span></div><div class="row" style="top:800px;width:401px"><span class="exp p" style="left:101px"></span><span class="ic" style="left:122px"><svg width="16" height="16" viewBox="0 0 16 16"><path d="M.5 4 v-1.500 q0 -1 1 -1 h4.500 q1 0 1.300 1 l.4 1.500 z" fill="#fbe08a" stroke="#d9a441"/><rect x=".5" y="3.500" width="14" height="10.500" rx="1" fill="#f6cba4" stroke="#d98f32"/><path d="M1.500 4.500 h12 M1.500 4.500 v8.500" stroke="#fbe6d2" fill="none"/></svg></span><span class="t" style="left:143px;letter-spacing:-0.151px">example</span></div><div class="row" style="top:820px;width:401px"><span class="exp" style="left:32px"></span><span class="ic" style="left:53px"><svg width="16" height="16" viewBox="0 0 16 16"><rect x=".7" y="1.700" width="14" height="13" rx=".8" fill="#f7c9a6" stroke="#d98a2b" stroke-width="1.400"/><rect x="4.500" y="4.500" width="6" height="8" fill="#eef0fa" stroke="#5a68b8"/><path d="M5.500 6.500 h4 M5.500 8.500 h4" stroke="#7a88c8"/></svg></span><span class="t" style="left:74px;letter-spacing:-0.488px">JBoss (Red Hat)</span></div><div class="row" style="top:840px;width:401px"><span class="exp" style="left:55px"></span><span class="ic" style="left:76px"><svg width="16" height="16" viewBox="0 0 16 16"><path d="M.5 4 v-1.500 q0 -1 1 -1 h4.500 q1 0 1.300 1 l.4 1.500 z" fill="#fbe08a" stroke="#d9a441"/><rect x=".5" y="3.500" width="14" height="10.500" rx="1" fill="#f6cba4" stroke="#d98f32"/><path d="M1.500 4.500 h12 M1.500 4.500 v8.500" stroke="#fbe6d2" fill="none"/><path d="M10 14.500 h5 v-6.500 h-1 v3 q0 2.500 -2.500 2.500 h-1.500 z" fill="#e01818" stroke="#8a0000" stroke-width=".6"/><path d="M10 13 q3.700 .2 3.700 -4.500" fill="none" stroke="#fff" stroke-width=".9"/></svg></span><span class="t" style="left:97px;letter-spacing:0.053px">HelloWorld</span></div><div class="row" style="top:860px;width:401px"><span class="ic" style="left:99px"><svg width="16" height="16" viewBox="0 0 16 16"><path d="M3.500 6 v5.500 h6 M6 3.500 h5" fill="none" stroke="#333" stroke-width="1.200"/><rect x="1" y="1.500" width="5" height="5" fill="#dfe6fa" stroke="#4a44c0" stroke-width="1.200"/><rect x="10.500" y="1" width="4.500" height="4.500" fill="#dfe6fa" stroke="#6a70c0"/><rect x="9.500" y="9" width="5.500" height="5.500" fill="#cfd8f6" stroke="#4a44c0" stroke-width="1.200"/></svg></span><span class="t" style="left:120px;letter-spacing:-0.488px">JBoss (Red Hat)</span></div><div class="row" style="top:880px;width:401px"><span class="exp" style="left:78px"></span><span class="ic" style="left:99px"><svg width="16" height="16" viewBox="0 0 16 16"><path d="M.5 4 v-1.500 q0 -1 1 -1 h4.500 q1 0 1.300 1 l.4 1.500 z" fill="#fbe08a" stroke="#d9a441"/><rect x=".5" y="3.500" width="14" height="10.500" rx="1" fill="#f6cba4" stroke="#d98f32"/><path d="M1.500 4.500 h12 M1.500 4.500 v8.500" stroke="#fbe6d2" fill="none"/></svg></span><span class="t" style="left:120px;letter-spacing:-0.015px">org</span></div><div class="row" style="top:900px;width:401px"><span class="exp" style="left:101px"></span><span class="ic" style="left:122px"><svg width="16" height="16" viewBox="0 0 16 16"><path d="M.5 4 v-1.500 q0 -1 1 -1 h4.500 q1 0 1.300 1 l.4 1.500 z" fill="#fbe08a" stroke="#d9a441"/><rect x=".5" y="3.500" width="14" height="10.500" rx="1" fill="#f6cba4" stroke="#d98f32"/><path d="M1.500 4.500 h12 M1.500 4.500 v8.500" stroke="#fbe6d2" fill="none"/></svg></span><span class="t" style="left:143px;letter-spacing:0.197px">jboss</span></div></div></div>
 <div class="sbv" style="left:402px;top:50px;height:912px"><span class="arr u" style="left:5px;top:7px"></span><span class="arr d" style="left:5px;top:902px"></span>
  <div class="thumb v" style="left:0;top:18px;width:15px;height:681px"><span class="abs" style="left:3px;top:333px;width:7px;height:7px;background:repeating-linear-gradient(#666 0 1px,transparent 1px 2px)"></span></div></div>
 <div class="sbh" style="left:1px;top:962px;width:401px"><span class="arr l" style="left:5px;top:5px"></span><span class="arr r" style="left:390px;top:5px"></span>
  <div class="thumb h" style="left:18px;top:2px;width:211px;height:14px"><span class="abs" style="left:101px;top:3px;width:7px;height:7px;background:repeating-linear-gradient(90deg,#666 0 1px,transparent 1px 2px)"></span></div></div>
 <div class="abs" style="left:402px;top:962px;width:17px;height:18px;background:#f0f0f0"></div><div class="abs" style="left:0;top:979px;width:419px;height:1px;background:#fff"></div>
</div>
<div class="split" style="left:419px;top:46px;width:4px;height:980px"></div><div class="abs" style="left:423px;top:46px;width:1px;height:980px;background:#a2a8b2"></div>

<div id="mp" class="abs" style="left:424px;top:46px;width:1095px;height:980px;background:#bcc7d8;overflow:hidden">
 <div class="abs" style="left:0;top:0;width:1095px;height:1px;background:#aab3c4"></div>
 <div class="abs" style="left:0;top:1px;width:1095px;height:27px;border-bottom:1px solid #a6a9af;overflow:hidden">
  <span class="abs" style="left:6px;top:9px"><svg width="12" height="11" viewBox="0 0 12 11"><path d="M1.500 1.500 l4 4 l-4 4 M6.500 1.500 l4 4 l-4 4" fill="none" stroke="#111" stroke-width="1.500"/></svg></span><span class="abs" style="left:24px;top:5px"><svg width="16" height="16" viewBox="0 0 16 16"><path d="M3.500 6 v9 M12.500 6 v9 M3.500 11.500 h8" fill="none" stroke="#222" stroke-width="1.300"/><path d="M12 11.500 l-3 -2.500 v5 z" fill="#222"/><rect x=".6" y="1.600" width="6" height="4.500" fill="#f4e21a" stroke="#8a7a10"/><rect x="9.600" y="1.600" width="6" height="4.500" fill="#f4e21a" stroke="#8a7a10"/></svg></span>
  <span class="abs" style="left:204px;top:6px;transform:translateX(-50%);white-space:nowrap;font-size:10.9px;line-height:12px;color:#7d828b">TouchExampleView</span><span class="abs" style="left:480px;top:6px;transform:translateX(-50%);white-space:nowrap;font-size:10.9px;line-height:12px;color:#7d828b">VersionedGestureDetector.FroyoDetector</span><span class="abs" style="left:777px;top:6px;transform:translateX(-50%);white-space:nowrap;font-size:10.9px;line-height:12px;color:#7d828b">VersionedGestureDetector.EclairDetector</span>
  <span class="abs" style="left:962px;top:6px;white-space:nowrap;font-size:10.900px;line-height:12px;color:#7d828b;width:64px;overflow:hidden">VersionedGestureDetector</span>
  <span class="abs" style="left:1028px;top:6px;width:66px;height:20px;background:#bcc7d8"></span>
  <span class="abs" style="left:1027px;top:8px"><svg width="11" height="12" viewBox="0 0 11 12"><path d="M1 6 l4.500 -4 l4.500 4 M1 10.500 l4.500 -4 l4.500 4" fill="none" stroke="#111" stroke-width="1.500"/></svg></span>
  <span class="abs" style="left:1040px;top:6px;white-space:nowrap;font-size:10.900px;line-height:12px;color:#7d828b;width:14px;overflow:hidden">reD</span>
  <span class="abs" style="left:1058px;top:13px;border:4px solid transparent;border-top:4px solid #111;border-bottom:0"></span>
  <span class="abs" style="left:1071px;top:9px;font-size:10px;color:#9aa0aa">:(</span>
  <span class="abs" style="left:1077.500px;top:9.500px"><svg width="10" height="10" viewBox="0 0 10 10"><path d="M1.500 1.500 l7 6.500 M8.500 1.500 l-7 6.500" stroke="#111" stroke-width="1.700"/></svg></span>
 </div>
 <div class="abs" style="left:0;top:28px;width:1095px;height:27px"><span class="abs" style="left:5px;top:3px;font-family:Liberation Serif,serif;font-size:17.500px;line-height:20px;color:#4a44b0">A</span><span class="abs" style="left:29px;top:6px;width:16px;height:16px"><svg width="16" height="16" viewBox="0 0 16 16"><text x="0" y="9" font-size="11" font-family="Liberation Sans,sans-serif" fill="#62626c">A</text><rect x="7" y="0" width="3.500" height="3.500" fill="#e070d8"/><rect x="11" y="0" width="3.500" height="3.500" fill="#e8d860"/><rect x="9" y="4" width="3.500" height="3.500" fill="#60d0d8"/><rect x=".5" y="11.500" width="15" height="3.500" fill="#bcc7d8" stroke="#9aa6c0"/></svg></span><span class="abs" style="left:51px;top:12px;border:3px solid transparent;border-top:3px solid #777;border-bottom:0"></span><span class="abs" style="left:64px;top:6px;width:16px;height:16px"><svg width="16" height="16" viewBox="0 0 16 16"><path d="M1 4 l4 -4 l5 5 l-4 4 z" fill="#c8d0f4" stroke="#556"/><path d="M9 3 q3 0 3 6 h2" fill="none" stroke="#3a68c8" stroke-width="1.600"/><rect x=".5" y="11.500" width="15" height="3.500" fill="#bcc7d8" stroke="#9aa6c0"/></svg></span><span class="abs" style="left:86px;top:12px;border:3px solid transparent;border-top:3px solid #777;border-bottom:0"></span><span class="abs" style="left:99px;top:6px;width:16px;height:16px"><svg width="16" height="16" viewBox="0 0 16 16"><path d="M2 6 l11 -5" stroke="#7a70c0"/><rect x=".5" y="7" width="4" height="4" fill="#e070d8"/><rect x="5.500" y="7" width="4" height="4" fill="#60d0d8"/><rect x="10.500" y="7" width="4" height="4" fill="#e0c860"/><rect x=".5" y="11.500" width="15" height="3.500" fill="#bcc7d8" stroke="#9aa6c0"/></svg></span><span class="abs" style="left:121px;top:12px;border:3px solid transparent;border-top:3px solid #777;border-bottom:0"></span><span class="abs" style="left:133px;top:5.500px;width:1px;height:19px;background:#8a93a6"></span><span class="abs" style="left:139px;top:4px;width:46px;height:17px;background:#d5dbe8;border:1px solid #eef1f6"><span class="abs" style="left:4px;top:1px;font-size:11px;line-height:13px;color:#8a7a9a">1</span><span class="abs" style="left:28px;top:0;width:16px;height:15px;background:#fff"></span><span class="abs" style="left:29px;top:1px;width:14px;height:6px;background:#bcc7d8"></span><span class="abs" style="left:29px;top:8px;width:14px;height:6px;background:#bcc7d8"></span><span class="abs" style="left:33px;top:2px;border:3px solid transparent;border-bottom:3px solid #111;border-top:0"></span><span class="abs" style="left:33px;top:10px;border:3px solid transparent;border-top:3px solid #111;border-bottom:0"></span></span><span class="abs" style="left:190px;top:6px;width:16px;height:16px"><svg width="16" height="16" viewBox="0 0 16 16"><path d="M13 .5 l2.500 2 l-4 5.500 l-3 -2 z" fill="#8ab0e8" stroke="#3a5a98"/><path d="M2 8 l6.500 -3 l4 4 l-5 5 z" fill="#e8c040" stroke="#8a7010"/><path d="M0 14.500 h8" stroke="#e8e020" stroke-width="1.500" stroke-dasharray="1 .5"/></svg></span><span class="abs" style="left:212px;top:6px;width:16px;height:16px"><svg width="16" height="16" viewBox="0 0 16 16"><path d="M12 .5 q3.500 0 3.500 3.500 l-3 2.500 l-3 -3 z" fill="#6a7490"/><path d="M10 4.500 l2 2 l-7 7 l-3.500 1 l1 -3 z" fill="#a8c8f0" stroke="#4a8ad0"/><path d="M0 14.500 h7" stroke="#40c0e8" stroke-width="1.500"/></svg></span><span class="abs" style="left:236px;top:5.500px;width:1px;height:19px;background:#8a93a6"></span><span class="abs" style="left:241px;top:2px;width:146px;height:19px;background:#f1f3f9;border:1px solid #7f8ba0"><span class="abs" style="left:2.500px;top:2px;font-size:11.300px;line-height:13px;white-space:nowrap">Default Style</span><span class="abs" style="left:134px;top:7px;border:3px solid transparent;border-top:3px solid #111;border-bottom:0"></span></span><span class="abs" style="left:-1px;top:-1px;width:1095px;height:27px"><span class="abs" style="left:395px;top:6px;width:16px;height:16px"><svg width="16" height="16" viewBox="0 0 16 16"><rect x="1" y="3" width="8" height="8" fill="#3a44c0"/><rect x="3" y="3" width="4" height="3" fill="#fff"/><path d="M14 1 l1.500 1.500 l-7 11 l-2.500 1.500 l.5 -3 z" fill="#f0b020" stroke="#8a5a10" stroke-width=".7"/></svg></span><span class="abs" style="left:417px;top:12px;border:3px solid transparent;border-top:3px solid #111;border-bottom:0"></span><span class="abs" style="left:428px;top:5.500px;width:1px;height:19px;background:#8a93a6"></span><span class="abs" style="left:436px;top:6px;width:16px;height:16px"><svg width="16" height="16" viewBox="0 0 16 16"><path d="M1.500 1 v14" stroke="#7c8494"/><rect x="4" y="2.500" width="4" height="4" fill="none" stroke="#7c8494"/><rect x="4" y="9.500" width="4" height="4" fill="none" stroke="#7c8494"/><path d="M15 4.500 h-5 m0 0 l2 -2 m-2 2 l2 2 M15 11.500 h-5 m0 0 l2 -2 m-2 2 l2 2" stroke="#7c8494" fill="none"/></svg></span><span class="abs" style="left:457px;top:6px;width:16px;height:16px"><svg width="16" height="16" viewBox="0 0 16 16"><path d="M14.500 1 v14" stroke="#7c8494"/><rect x="8" y="2.500" width="4" height="4" fill="none" stroke="#7c8494"/><rect x="8" y="9.500" width="4" height="4" fill="none" stroke="#7c8494"/><path d="M1 4.500 h5 m0 0 l-2 -2 m2 2 l-2 2 M1 11.500 h5 m0 0 l-2 -2 m2 2 l-2 2" stroke="#7c8494" fill="none"/></svg></span><span class="abs" style="left:479px;top:6px;width:16px;height:16px"><svg width="16" height="16" viewBox="0 0 16 16"><path d="M1 1.500 h14" stroke="#7c8494"/><rect x="2.500" y="4" width="4" height="4" fill="none" stroke="#7c8494"/><rect x="9.500" y="4" width="4" height="4" fill="none" stroke="#7c8494"/><path d="M4.500 15 v-5 m0 0 l-2 2 m2 -2 l2 2 M11.500 15 v-5 m0 0 l-2 2 m2 -2 l2 2" stroke="#7c8494" fill="none"/></svg></span><span class="abs" style="left:501px;top:6px;width:16px;height:16px"><svg width="16" height="16" viewBox="0 0 16 16"><path d="M1 14.500 h14" stroke="#7c8494"/><rect x="2.500" y="8" width="4" height="4" fill="none" stroke="#7c8494"/><rect x="9.500" y="8" width="4" height="4" fill="none" stroke="#7c8494"/><path d="M4.500 1 v5 m0 0 l-2 -2 m2 2 l2 -2 M11.500 1 v5 m0 0 l-2 -2 m2 2 l2 -2" stroke="#7c8494" fill="none"/></svg></span><span class="abs" style="left:525px;top:6px;width:16px;height:16px"><svg width="16" height="16" viewBox="0 0 16 16"><rect x="6.500" y="6.500" width="9" height="9" fill="#a8b0d8" stroke="#8088b8"/><rect x=".5" y=".5" width="5" height="5" fill="#b8c0e0" stroke="#8088b8"/><rect x="3.500" y="3.500" width="9" height="9" fill="#f0e8a8" stroke="#8a8a9a"/></svg></span><span class="abs" style="left:546px;top:6px;width:16px;height:16px"><svg width="16" height="16" viewBox="0 0 16 16"><rect x="4.500" y="4.500" width="8" height="8" fill="#f0e8a8" stroke="#8a8a9a"/><rect x=".5" y=".5" width="7" height="7" fill="#a8b4dc" stroke="#8088b8"/><rect x="8.500" y="8.500" width="7" height="7" fill="#a8b4dc" stroke="#8088b8"/></svg></span><span class="abs" style="left:569px;top:5.500px;width:1px;height:19px;background:#8a93a6"></span><span class="abs" style="left:578px;top:6px;width:16px;height:16px"><svg width="16" height="16" viewBox="0 0 16 16"><ellipse cx="7.500" cy="2" rx="2.500" ry="1.500" fill="#fff" stroke="#111"/><path d="M7.500 3.500 v3 M2.500 8 v-1.500 h10 v1.500 M7.500 6.500 v4 M4.500 13 l3 -2.500 l3 2.500" stroke="#111" fill="none"/><ellipse cx="2.500" cy="8.500" rx="2" ry="1.400" fill="#fff" stroke="#111"/><ellipse cx="12.500" cy="8.500" rx="2" ry="1.400" fill="#fff" stroke="#111"/><ellipse cx="4" cy="13.800" rx="2" ry="1.400" fill="#fff" stroke="#223a9a"/><ellipse cx="11" cy="13.800" rx="2" ry="1.400" fill="#fff" stroke="#223a9a"/></svg></span><span class="abs" style="left:600px;top:12px;border:3px solid transparent;border-top:3px solid #111;border-bottom:0"></span><span class="abs" style="left:610px;top:6px;width:16px;height:16px"><svg width="16" height="16" viewBox="0 0 16 16"><rect x="1.500" y="3.500" width="11" height="11" fill="#eef2ff" stroke="#3a48a8"/><path d="M3.500 8.500 h7 M3.500 10.500 h7 M3.500 12.500 h7" stroke="#3a48a8"/><path d="M5 5 l5 -4 l4 1 l-5 4 z" fill="#e8c838" stroke="#6a5a10" stroke-width=".7"/><path d="M14.500 1 v5" stroke="#111" stroke-width="1.500"/></svg></span><span class="abs" style="left:634px;top:5.500px;width:1px;height:19px;background:#8a93a6"></span><span class="abs" style="left:642px;top:6px;width:16px;height:16px"><svg width="16" height="16" viewBox="0 0 16 16"><path d="M2 2 l11 12 M13 2 l-11 12" stroke="#e06464" stroke-width="1.400"/></svg></span><span class="abs" style="left:664px;top:5.500px;width:1px;height:19px;background:#8a93a6"></span><span class="abs" style="left:670px;top:5px;width:116px;height:17px;background:#fff;border:1px solid #98a2b4"></span><span class="abs" style="left:793px;top:6px;width:16px;height:16px"><svg width="16" height="16" viewBox="0 0 16 16"><path d="M1 2 h13 l-5 6 v7 l-3 -2 v-5 z" fill="#7a78e0" stroke="#5a58c0" stroke-width=".6"/></svg></span></span><span class="abs" style="left:1083px;top:0;width:11px;height:27px;background:#d4dbe8;border-radius:0 0 0 4px"></span><span class="abs" style="left:1086px;top:17px;width:6px;height:1px;background:#111"></span><span class="abs" style="left:1086px;top:20px;border:3px solid transparent;border-top:3.500px solid #111;border-bottom:0"></span></div>
 <div class="abs" style="left:0;top:55px;width:1078px;height:885px;overflow:hidden"><svg width="1078" height="885" viewBox="0 0 1078 885" style="position:absolute;left:0;top:0" font-family="Liberation Sans, sans-serif" font-size="10.85px"><defs><linearGradient id="bg" x1="0" y1="0" x2="0" y2="1"><stop offset="0" stop-color="#ffffff"/><stop offset="1" stop-color="#e3e8f4"/></linearGradient><linearGradient id="bx" x1="0" y1="0" x2="1" y2="0"><stop offset="0" stop-color="#c9eef0"/><stop offset=".5" stop-color="#bdeaec"/><stop offset="1" stop-color="#a3e0e6"/></linearGradient></defs><rect width="1078" height="885" fill="url(#bg)"/><rect x="97.5" y="52.5" width="220" height="50" rx="3" fill="#d6d8dd"/><rect x="94.5" y="49.5" width="219" height="49" rx="3" fill="url(#bx)" stroke="#000"/><text x="204.0" y="62" text-anchor="middle" textLength="195.5" lengthAdjust="spacing">TouchExampleView: TouchExampleView</text><rect x="364.5" y="52.5" width="237" height="50" rx="3" fill="#d6d8dd"/><rect x="361.5" y="49.5" width="236" height="49" rx="3" fill="url(#bx)" stroke="#000"/><text x="479.5" y="62" text-anchor="middle" textLength="193" lengthAdjust="spacing">VersionedGestureDetector.FroyoDetector:</text><text x="479.5" y="75" text-anchor="middle" textLength="65.2" lengthAdjust="spacing">FroyoDetector</text><rect x="667.5" y="52.5" width="225" height="50" rx="3" fill="#d6d8dd"/><rect x="664.5" y="49.5" width="224" height="49" rx="3" fill="url(#bx)" stroke="#000"/><text x="776.5" y="62" text-anchor="middle" textLength="194" lengthAdjust="spacing">VersionedGestureDetector.EclairDetector:</text><text x="776.5" y="75" text-anchor="middle" textLength="65.7" lengthAdjust="spacing">EclairDetector</text><rect x="958.5" y="52.5" width="227" height="50" rx="3" fill="#d6d8dd"/><rect x="955.5" y="49.5" width="226" height="49" rx="3" fill="url(#bx)" stroke="#000"/><text x="1068.5" y="62" text-anchor="middle" textLength="208" lengthAdjust="spacing">VersionedGestureDetector.CupcakeDetector:</text><text x="1068.5" y="75" text-anchor="middle" textLength="79.5" lengthAdjust="spacing">CupcakeDetector</text><path d="M203.5 99 V744" stroke="#000" stroke-width="1" stroke-dasharray="7 4"/><path d="M479.5 99 V744" stroke="#000" stroke-width="1" stroke-dasharray="7 4"/><path d="M776.5 99 V744" stroke="#000" stroke-width="1" stroke-dasharray="7 4"/><path d="M1068.5 99 V744" stroke="#000" stroke-width="1" stroke-dasharray="7 4"/><rect x="474.5" y="134.5" width="9" height="154" rx="2" fill="#c4ecee" stroke="#000"/><rect x="474.5" y="309.5" width="9" height="293" rx="2" fill="#c4ecee" stroke="#000"/><rect x="474.5" y="644.5" width="9" height="83" rx="2" fill="#c4ecee" stroke="#000"/><rect x="771.5" y="169.5" width="9" height="430" rx="2" fill="#c4ecee" stroke="#000"/><rect x="1063.5" y="204.5" width="9" height="395" rx="2" fill="#c4ecee" stroke="#000"/><rect x="776.5" y="239.5" width="9" height="11" rx="2.500" fill="#c4ecee" stroke="#000"/><rect x="776.5" y="274.5" width="9" height="11" rx="2.500" fill="#c4ecee" stroke="#000"/><rect x="479.5" y="484.5" width="9" height="11" rx="2.500" fill="#c4ecee" stroke="#000"/><rect x="198.5" y="553.5" width="9" height="11" rx="2.500" fill="#c4ecee" stroke="#000"/><rect x="198.5" y="588.5" width="9" height="11" rx="2.500" fill="#c4ecee" stroke="#000"/><path d="M27 134.5 H474.5" stroke="#000"/><path d="M474.5 134.5 l-13 -4.5 v9 z" fill="#000"/><circle cx="26.5" cy="134.5" r="7.500" fill="#1a1a1a"/><rect x="161.75" y="120" width="182.5" height="12" fill="#fbfcfd"/><text x="253" y="130" text-anchor="middle" textLength="180.5" lengthAdjust="spacing">onTouchEvent(MotionEvent): boolean</text><path d="M484 169.5 H771.5" stroke="#000"/><path d="M771.5 169.5 l-13 -4.5 v9 z" fill="#000"/><rect x="535.75" y="155" width="182.5" height="12" fill="#fafbfd"/><text x="627" y="165" text-anchor="middle" textLength="180.5" lengthAdjust="spacing">onTouchEvent(MotionEvent): boolean</text><path d="M781 204.5 H1063.5" stroke="#000"/><path d="M1063.5 204.5 l-13 -4.5 v9 z" fill="#000"/><rect x="830.75" y="190" width="182.5" height="12" fill="#f9fafd"/><text x="922" y="200" text-anchor="middle" textLength="180.5" lengthAdjust="spacing">onTouchEvent(MotionEvent): boolean</text><path d="M1063 239.5 H786" stroke="#000"/><path d="M786 239.5 l13 -4.5 v9 z" fill="#000"/><rect x="850.9" y="225" width="146.2" height="12" fill="#f8f9fc"/><text x="924" y="235" text-anchor="middle" textLength="144.2" lengthAdjust="spacing">getActiveX(MotionEvent): float</text><path d="M1063 274.5 H786" stroke="#000"/><path d="M786 274.5 l13 -4.5 v9 z" fill="#000"/><rect x="850.9" y="260" width="146.2" height="12" fill="#f7f8fc"/><text x="924" y="270" text-anchor="middle" textLength="144.2" lengthAdjust="spacing">getActiveY(MotionEvent): float</text><path d="M27 309.5 H474.5" stroke="#000"/><path d="M474.5 309.5 l-13 -4.5 v9 z" fill="#000"/><circle cx="26.5" cy="309.5" r="7.500" fill="#1a1a1a"/><rect x="161.75" y="295" width="182.5" height="12" fill="#f6f7fb"/><text x="253" y="305" text-anchor="middle" textLength="180.5" lengthAdjust="spacing">onTouchEvent(MotionEvent): boolean</text><path d="M484 344.5 H771.5" stroke="#000"/><path d="M771.5 344.5 l-13 -4.5 v9 z" fill="#000"/><rect x="535.75" y="330" width="182.5" height="12" fill="#f4f6fb"/><text x="627" y="340" text-anchor="middle" textLength="180.5" lengthAdjust="spacing">onTouchEvent(MotionEvent): boolean</text><path d="M772 484.5 H489" stroke="#000"/><path d="M489 484.5 l13 -4.5 v9 z" fill="#000"/><path d="M772 554.5 H208" stroke="#000"/><path d="M208 554.5 l13 -4.5 v9 z" fill="#000"/><path d="M772 589.5 H208" stroke="#000"/><path d="M208 589.5 l13 -4.5 v9 z" fill="#000"/><rect x="9.5" y="616.5" width="1200" height="124" fill="none" stroke="#000"/><path d="M9.5 616.5 h66 l-12 19 h-54 z" fill="#fbe5c4" stroke="#000" stroke-width=".9"/><text x="14" y="630" font-weight="bold" font-size="10.5px">loop 1 (2)</text><path d="M27 644.5 H474.5" stroke="#000"/><path d="M474.5 644.5 l-13 -4.5 v9 z" fill="#000"/><circle cx="26.5" cy="644.5" r="7.500" fill="#1a1a1a"/><rect x="161.75" y="630" width="182.5" height="12" fill="#ebeef7"/><text x="253" y="640" text-anchor="middle" textLength="180.5" lengthAdjust="spacing">onTouchEvent(MotionEvent): boolean</text><path d="M484 679.5 H771.5" stroke="#000"/><path d="M771.5 679.5 l-13 -4.5 v9 z" fill="#000"/><rect x="535.75" y="665" width="182.5" height="12" fill="#eaeef7"/><text x="627" y="675" text-anchor="middle" textLength="180.5" lengthAdjust="spacing">onTouchEvent(MotionEvent): boolean</text></svg></div>
 <div class="sbv" style="left:1078px;top:55px;height:885px;width:16px;border-left:0"><span class="arr u" style="left:4px;top:6px"></span><span class="arr d" style="left:4px;top:873px"></span>
  <div class="thumb v" style="left:0;top:17px;width:15px;height:700px"></div></div>
 <div class="sbh" style="left:0;top:940px;width:1078px;height:16px"><span class="arr l" style="left:5px;top:4px"></span><span class="arr r" style="left:1066px;top:4px"></span>
  <div class="thumb h" style="left:17px;top:1px;width:747px;height:15px"><span class="abs" style="left:368px;top:3px;width:7px;height:7px;background:repeating-linear-gradient(90deg,#666 0 1px,transparent 1px 2px)"></span></div></div>
 <div class="abs" style="left:1078px;top:940px;width:17px;height:16px;background:#f0f0f0"></div>
 <div class="abs tabbar" style="left:0;top:956px;width:1095px;height:24px;border-bottom:1px solid #aab0bc">
  <span class="abs" style="left:.5px;top:4px;color:#fff;white-space:nowrap;line-height:14px;letter-spacing:-0.38px">ctmanager_ContactAdder_onCreate</span>
  <span class="abs" style="left:193px;top:2px;opacity:.75"><svg width="16" height="16" viewBox="0 0 16 16"><path d="M3.500 6 v9 M12.500 6 v9 M3.500 11.500 h8" fill="none" stroke="#222" stroke-width="1.300"/><path d="M12 11.500 l-3 -2.500 v5 z" fill="#222"/><rect x=".6" y="1.600" width="6" height="4.500" fill="#f4e21a" stroke="#8a7a10"/><rect x="9.600" y="1.600" width="6" height="4.500" fill="#f4e21a" stroke="#8a7a10"/></svg></span>
  <span class="abs" style="left:211px;top:4px;color:#fff;white-space:nowrap;line-height:14px;letter-spacing:-0.513px">com_example_myapp_DisplayMessageActivity_onCreate</span>
  <div class="abs" style="left:500px;top:0;width:551px;height:21px;background:#fff;border-radius:0 0 3px 3px"><span class="abs" style="left:4px;top:2px"><svg width="16" height="16" viewBox="0 0 16 16"><path d="M3.500 6 v9 M12.500 6 v9 M3.500 11.500 h8" fill="none" stroke="#222" stroke-width="1.300"/><path d="M12 11.500 l-3 -2.500 v5 z" fill="#222"/><rect x=".6" y="1.600" width="6" height="4.500" fill="#f4e21a" stroke="#8a7a10"/><rect x="9.600" y="1.600" width="6" height="4.500" fill="#f4e21a" stroke="#8a7a10"/></svg></span><span class="abs" style="left:22px;top:3px;white-space:nowrap;line-height:14px;font-weight:bold;font-size:12px;letter-spacing:-0.662px">*com_example_android_touchexample_VersionedGestureDetector$FroyoDetector_onTouchEvent</span><span class="abs" style="left:535px;top:7px"><svg width="10" height="10" viewBox="0 0 10 10"><path d="M1.500 1.500 l7 6.500 M8.500 1.500 l-7 6.500" stroke="#111" stroke-width="1.700"/></svg></span></div>
  <span class="arr l" style="left:1064px;top:7px;border-right-color:#dfe4ee;border-width:4px 5px 4px 0"></span><span class="arr r" style="left:1082px;top:7px;border-left-color:#dfe4ee;border-width:4px 0 4px 5px"></span>
 </div>
</div>
<div class="abs" style="left:1518px;top:46px;width:1px;height:980px;background:#a2a8b2"></div><div class="split" style="left:1519px;top:46px;width:4px;height:980px"></div>

<div id="rp" class="abs" style="left:1523px;top:46px;width:397px;height:980px;background:#fff">
 <div class="abs" style="left:0;top:0;width:397px;height:22px;background:linear-gradient(#fff7e4 0,#fff1d2 48%,#ffe8b0 52%,#ffe9b4 100%)"><span class="abs" style="left:4px;top:4px;line-height:14px;letter-spacing:-0.359px">Execution Analyzer</span>
  <span class="abs" style="left:348.500px;top:10px;border:5px solid transparent;border-top:5px solid #111;border-bottom:0"></span>
  <span class="abs" style="left:366px;top:5.500px"><svg width="9" height="12" viewBox="0 0 9 12"><path d="M2.500 1.500 h4 v5 h-4 z M5.500 1.500 v5 M.5 6.500 h8 M4.500 6.500 v4.500" fill="none" stroke="#111" stroke-width="1.200"/></svg></span><span class="abs" style="left:381.500px;top:6.500px"><svg width="10" height="10" viewBox="0 0 10 10"><path d="M1.500 1.500 l7 7 M8.500 1.500 l-7 7" stroke="#111" stroke-width="1.600"/></svg></span></div>
 <div class="abs" style="left:0;top:22px;width:397px;height:27px;background:#bcc7d8"><span class="abs" style="left:7px;top:6.500px;width:16px;height:16px"><svg width="16" height="16" viewBox="0 0 16 16"><rect x="4.500" y="2.500" width="11" height="9" fill="#f6f8fe" stroke="#8a96c0"/><path d="M6 4.500 h8" stroke="#3a58c8" stroke-width="1.200" stroke-dasharray="2 1"/><path d="M8.92 9.74 L10.45 9.80 L10.45 11.20 L8.92 11.26 L8.46 12.38 L9.50 13.50 L8.50 14.50 L7.38 13.46 L6.26 13.92 L6.20 15.45 L4.80 15.45 L4.74 13.92 L3.62 13.46 L2.50 14.50 L1.50 13.50 L2.54 12.38 L2.08 11.26 L0.55 11.20 L0.55 9.80 L2.08 9.74 L2.54 8.62 L1.50 7.50 L2.50 6.50 L3.62 7.54 L4.74 7.08 L4.80 5.55 L6.20 5.55 L6.26 7.08 L7.38 7.54 L8.50 6.50 L9.50 7.50 L8.46 8.62 Z" fill="#6258c0" stroke="#3e3690" stroke-width=".5"/><circle cx="5.5" cy="10.5" r="2.300" fill="#8a84d8"/><circle cx="5.5" cy="10.5" r=".9" fill="#b8e030"/></svg></span><span class="abs" style="left:30px;top:13px;border:3px solid transparent;border-top:3px solid #111;border-bottom:0"></span><span class="abs" style="left:41px;top:6px;width:1px;height:19px;background:#8a93a6"></span><span class="abs" style="left:47px;top:6.500px;width:17px;height:16px"><svg width="17" height="16" viewBox="0 0 17 16"><rect x="4.500" y="3.500" width="10" height="8" fill="#f6f8fe" stroke="#8a96c0"/><path d="M6 5.500 h5" stroke="#3a58c8" stroke-width="1.200" stroke-dasharray="2 1"/><path d="M8.92 9.74 L10.45 9.80 L10.45 11.20 L8.92 11.26 L8.46 12.38 L9.50 13.50 L8.50 14.50 L7.38 13.46 L6.26 13.92 L6.20 15.45 L4.80 15.45 L4.74 13.92 L3.62 13.46 L2.50 14.50 L1.50 13.50 L2.54 12.38 L2.08 11.26 L0.55 11.20 L0.55 9.80 L2.08 9.74 L2.54 8.62 L1.50 7.50 L2.50 6.50 L3.62 7.54 L4.74 7.08 L4.80 5.55 L6.20 5.55 L6.26 7.08 L7.38 7.54 L8.50 6.50 L9.50 7.50 L8.46 8.62 Z" fill="#6258c0" stroke="#3e3690" stroke-width=".5"/><circle cx="5.5" cy="10.5" r="2.300" fill="#8a84d8"/><circle cx="5.5" cy="10.5" r=".9" fill="#b8e030"/><path d="M12 0 h2 v2 h2 v2 h-2 v2 h-2 v-2 h-2 v-2 h2 z" fill="#7ae848" stroke="#1a8a1a" stroke-width=".8"/></svg></span><span class="abs" style="left:70px;top:6.500px;width:16px;height:16px"><svg width="16" height="16" viewBox="0 0 16 16"><g transform="translate(1,-1)"><path d="M8.92 9.74 L10.45 9.80 L10.45 11.20 L8.92 11.26 L8.46 12.38 L9.50 13.50 L8.50 14.50 L7.38 13.46 L6.26 13.92 L6.20 15.45 L4.80 15.45 L4.74 13.92 L3.62 13.46 L2.50 14.50 L1.50 13.50 L2.54 12.38 L2.08 11.26 L0.55 11.20 L0.55 9.80 L2.08 9.74 L2.54 8.62 L1.50 7.50 L2.50 6.50 L3.62 7.54 L4.74 7.08 L4.80 5.55 L6.20 5.55 L6.26 7.08 L7.38 7.54 L8.50 6.50 L9.50 7.50 L8.46 8.62 Z" fill="#6258c0" stroke="#3e3690" stroke-width=".5"/><circle cx="5.5" cy="10.5" r="2.300" fill="#8a84d8"/><circle cx="5.5" cy="10.5" r=".9" fill="#b8e030"/></g><path d="M15 .5 l-4.500 4.500 m0 -3.500 v3.500 h3.500" stroke="#eef0ff" fill="none" stroke-width="1.200"/></svg></span><span class="abs" style="left:91px;top:6.500px;width:16px;height:16px"><svg width="16" height="16" viewBox="0 0 16 16"><g transform="translate(1,-1)"><path d="M8.92 9.74 L10.45 9.80 L10.45 11.20 L8.92 11.26 L8.46 12.38 L9.50 13.50 L8.50 14.50 L7.38 13.46 L6.26 13.92 L6.20 15.45 L4.80 15.45 L4.74 13.92 L3.62 13.46 L2.50 14.50 L1.50 13.50 L2.54 12.38 L2.08 11.26 L0.55 11.20 L0.55 9.80 L2.08 9.74 L2.54 8.62 L1.50 7.50 L2.50 6.50 L3.62 7.54 L4.74 7.08 L4.80 5.55 L6.20 5.55 L6.26 7.08 L7.38 7.54 L8.50 6.50 L9.50 7.50 L8.46 8.62 Z" fill="#6258c0" stroke="#3e3690" stroke-width=".5"/><circle cx="5.5" cy="10.5" r="2.300" fill="#8a84d8"/><circle cx="5.5" cy="10.5" r=".9" fill="#b8e030"/></g><path d="M10.500 5 l4.500 -4.500 m-3.500 0 h3.500 v3.500" stroke="#eef0ff" fill="none" stroke-width="1.200"/></svg></span><span class="abs" style="left:115px;top:6px;width:1px;height:19px;background:#8a93a6"></span><span class="abs" style="left:122px;top:6.500px;width:16px;height:16px"><svg width="16" height="16" viewBox="0 0 16 16"><rect x=".5" y="3.500" width="15" height="11" fill="#fff" stroke="#5a68a8"/><path d="M2 6.500 h12 M2 8.500 h12 M2 10.500 h12 M2 12.500 h12" stroke="#5a68a8" stroke-dasharray="1 1"/><path d="M1 1.500 h14" stroke="#333" stroke-dasharray="1 1"/><path d="M8 2 v6 m0 0 l-3 -3 m3 3 l3 -3" stroke="#2a5ad8" stroke-width="1.600" fill="none"/></svg></span><span class="abs" style="left:144px;top:6.500px;width:16px;height:16px"><svg width="16" height="16" viewBox="0 0 16 16"><rect x=".5" y="5.500" width="15" height="9" fill="#e8e8ec" stroke="#a0a4b0"/><path d="M2 8.500 h12 M2 10.500 h12 M2 12.500 h12" stroke="#a0a4b0" stroke-dasharray="1 1"/><path d="M5 1 l6 6 M11 1 l-6 6" stroke="#e88a8a" stroke-width="1.200"/></svg></span><span class="abs" style="left:165px;top:6.500px;width:16px;height:16px"><svg width="16" height="16" viewBox="0 0 16 16"><circle cx="9" cy="2.500" r="1.500" fill="#666"/><path d="M9 4.500 l-2 4 l3 2 l-1 4 M7 8.500 l-2.500 5.500 M8.500 5.500 l-3.500 1 M8.500 5.500 l3.500 2.500" fill="none" stroke="#666" stroke-width="1.300"/></svg></span><span class="abs" style="left:187px;top:6.500px;width:16px;height:16px"><svg width="16" height="16" viewBox="0 0 16 16"><circle cx="9" cy="2.500" r="1.500" fill="#666"/><path d="M9 4.500 l-2 4 l3 2 l-1 4 M7 8.500 l-2.500 5.500 M8.500 5.500 l-3.500 1 M8.500 5.500 l3.500 2.500" fill="none" stroke="#666" stroke-width="1.300"/><path d="M13 8 v5 m0 0 l2 -2" stroke="#e85a3a" fill="none"/></svg></span><span class="abs" style="left:209px;top:6.500px;width:16px;height:16px"><svg width="16" height="16" viewBox="0 0 16 16"><circle cx="9" cy="2.500" r="1.500" fill="#111"/><path d="M9 4.500 l-2 4 l3 2 l-1 4 M7 8.500 l-2.500 5.500 M8.500 5.500 l-3.500 1 M8.500 5.500 l3.500 2.500" fill="none" stroke="#111" stroke-width="1.300"/><rect x="11" y="10" width="2" height="2" fill="#2a4ad8"/><rect x="14" y="10" width="2" height="2" fill="#2a4ad8"/><rect x="11" y="13" width="2" height="2" fill="#2a4ad8"/><rect x="14" y="13" width="2" height="2" fill="#2a4ad8"/></svg></span><span class="abs" style="left:233px;top:6px;width:1px;height:19px;background:#8a93a6"></span><span class="abs" style="left:240px;top:6.500px;width:16px;height:16px"><svg width="16" height="16" viewBox="0 0 16 16"><circle cx="8" cy="8" r="7" fill="#e8e8fc" stroke="#5a58d0" stroke-width="1"/><circle cx="8" cy="8" r="5.300" fill="#7a78d8"/><text x="8" y="11.500" font-size="9" font-weight="bold" text-anchor="middle" fill="#fff" font-family="Liberation Sans,sans-serif">?</text></svg></span></div>
 <div class="tree" style="left:0;top:49px;width:397px;height:908px"><div class="row" style="top:0px;width:397px"><span class="exp" style="left:7px"></span><span class="ic" style="left:25px"><svg width="16" height="16" viewBox="0 0 16 16"><path d="M1.500 13.500 v-9.500 h4 l1.500 1.500 h6 v2.500" fill="#f8e4a0" stroke="#c8942a"/><path d="M1.500 13.500 l3 -6 h11 l-3 6 z" fill="#f4c454" stroke="#c8942a"/><path d="M9.500 3.500 q2.500 -2.500 5 -1.500 m.3 -1.500 l0 2 l-2 0" fill="none" stroke="#333" stroke-width=".9"/></svg></span><span class="t" style="left:47px;letter-spacing:-0.064px">VEA.Android.ContactManager</span></div><div class="row" style="top:20px;width:397px"><span class="cb" style="left:51px;width:12px;height:12px;background:linear-gradient(135deg,#ececf0,#fff 70%);border-color:#8c8ea0"></span><span class="ic" style="left:66px"><svg width="16" height="16" viewBox="0 0 16 16"><rect x="4.500" y="2.500" width="11" height="9" fill="#f6f8fe" stroke="#8a96c0"/><path d="M6 4.500 h8" stroke="#3a58c8" stroke-width="1.200" stroke-dasharray="2 1"/><path d="M8.92 9.74 L10.45 9.80 L10.45 11.20 L8.92 11.26 L8.46 12.38 L9.50 13.50 L8.50 14.50 L7.38 13.46 L6.26 13.92 L6.20 15.45 L4.80 15.45 L4.74 13.92 L3.62 13.46 L2.50 14.50 L1.50 13.50 L2.54 12.38 L2.08 11.26 L0.55 11.20 L0.55 9.80 L2.08 9.74 L2.54 8.62 L1.50 7.50 L2.50 6.50 L3.62 7.54 L4.74 7.08 L4.80 5.55 L6.20 5.55 L6.26 7.08 L7.38 7.54 L8.50 6.50 L9.50 7.50 L8.46 8.62 Z" fill="#6258c0" stroke="#3e3690" stroke-width=".5"/><circle cx="5.5" cy="10.5" r="2.300" fill="#8a84d8"/><circle cx="5.5" cy="10.5" r=".9" fill="#b8e030"/></svg></span><span class="t" style="left:86px;letter-spacing:-0.05px">Contact Manger (Local)</span></div><div class="row" style="top:40px;width:397px"><span class="exp" style="left:7px"></span><span class="ic" style="left:25px"><svg width="16" height="16" viewBox="0 0 16 16"><path d="M1.500 13.500 v-9.500 h4 l1.500 1.500 h6 v2.500" fill="#f8e4a0" stroke="#c8942a"/><path d="M1.500 13.500 l3 -6 h11 l-3 6 z" fill="#f4c454" stroke="#c8942a"/><path d="M9.500 3.500 q2.500 -2.500 5 -1.500 m.3 -1.500 l0 2 l-2 0" fill="none" stroke="#333" stroke-width=".9"/></svg></span><span class="t" style="left:47px;letter-spacing:-0.041px">VEA.Android.MyApp</span></div><div class="row" style="top:60px;width:397px"><span class="cb" style="left:51px;width:12px;height:12px;background:linear-gradient(135deg,#ececf0,#fff 70%);border-color:#8c8ea0"></span><span class="ic" style="left:66px"><svg width="16" height="16" viewBox="0 0 16 16"><rect x="4.500" y="2.500" width="11" height="9" fill="#f6f8fe" stroke="#8a96c0"/><path d="M6 4.500 h8" stroke="#3a58c8" stroke-width="1.200" stroke-dasharray="2 1"/><path d="M8.92 9.74 L10.45 9.80 L10.45 11.20 L8.92 11.26 L8.46 12.38 L9.50 13.50 L8.50 14.50 L7.38 13.46 L6.26 13.92 L6.20 15.45 L4.80 15.45 L4.74 13.92 L3.62 13.46 L2.50 14.50 L1.50 13.50 L2.54 12.38 L2.08 11.26 L0.55 11.20 L0.55 9.80 L2.08 9.74 L2.54 8.62 L1.50 7.50 L2.50 6.50 L3.62 7.54 L4.74 7.08 L4.80 5.55 L6.20 5.55 L6.26 7.08 L7.38 7.54 L8.50 6.50 L9.50 7.50 L8.46 8.62 Z" fill="#6258c0" stroke="#3e3690" stroke-width=".5"/><circle cx="5.5" cy="10.5" r="2.300" fill="#8a84d8"/><circle cx="5.5" cy="10.5" r=".9" fill="#b8e030"/></svg></span><span class="t" style="left:86px;letter-spacing:-0.3px">Win8Test01</span></div><div class="row" style="top:80px;width:397px"><span class="cb" style="left:51px;width:12px;height:12px;background:linear-gradient(135deg,#ececf0,#fff 70%);border-color:#8c8ea0"><svg width="11" height="11" viewBox="0 0 11 11" style="position:absolute;left:0;top:0"><path d="M2.500 5 l2 3 l4 -6" fill="none" stroke="#2a3a9a" stroke-width="1.800"/></svg></span><span class="ic" style="left:66px"><svg width="16" height="16" viewBox="0 0 16 16"><rect x="4.500" y="2.500" width="11" height="9" fill="#f6f8fe" stroke="#8a96c0"/><path d="M6 4.500 h8" stroke="#3a58c8" stroke-width="1.200" stroke-dasharray="2 1"/><path d="M8.92 9.74 L10.45 9.80 L10.45 11.20 L8.92 11.26 L8.46 12.38 L9.50 13.50 L8.50 14.50 L7.38 13.46 L6.26 13.92 L6.20 15.45 L4.80 15.45 L4.74 13.92 L3.62 13.46 L2.50 14.50 L1.50 13.50 L2.54 12.38 L2.08 11.26 L0.55 11.20 L0.55 9.80 L2.08 9.74 L2.54 8.62 L1.50 7.50 L2.50 6.50 L3.62 7.54 L4.74 7.08 L4.80 5.55 L6.20 5.55 L6.26 7.08 L7.38 7.54 L8.50 6.50 L9.50 7.50 L8.46 8.62 Z" fill="#6258c0" stroke="#3e3690" stroke-width=".5"/><circle cx="5.5" cy="10.5" r="2.300" fill="#8a84d8"/><circle cx="5.5" cy="10.5" r=".9" fill="#b8e030"/></svg></span><span class="t" style="left:86px;letter-spacing:-0.014px">Android Local</span></div><div class="row" style="top:100px;width:397px"><span class="exp" style="left:7px"></span><span class="ic" style="left:25px"><svg width="16" height="16" viewBox="0 0 16 16"><path d="M1.500 13.500 v-9.500 h4 l1.500 1.500 h6 v2.500" fill="#f8e4a0" stroke="#c8942a"/><path d="M1.500 13.500 l3 -6 h11 l-3 6 z" fill="#f4c454" stroke="#c8942a"/><path d="M9.500 3.500 q2.500 -2.500 5 -1.500 m.3 -1.500 l0 2 l-2 0" fill="none" stroke="#333" stroke-width=".9"/></svg></span><span class="t" style="left:47px;letter-spacing:-0.01px">VEA.Android.TicTacToe</span></div><div class="row" style="top:120px;width:397px"><span class="cb" style="left:51px;width:12px;height:12px;background:linear-gradient(135deg,#ececf0,#fff 70%);border-color:#8c8ea0"></span><span class="ic" style="left:66px"><svg width="16" height="16" viewBox="0 0 16 16"><rect x="4.500" y="2.500" width="11" height="9" fill="#f6f8fe" stroke="#8a96c0"/><path d="M6 4.500 h8" stroke="#3a58c8" stroke-width="1.200" stroke-dasharray="2 1"/><path d="M8.92 9.74 L10.45 9.80 L10.45 11.20 L8.92 11.26 L8.46 12.38 L9.50 13.50 L8.50 14.50 L7.38 13.46 L6.26 13.92 L6.20 15.45 L4.80 15.45 L4.74 13.92 L3.62 13.46 L2.50 14.50 L1.50 13.50 L2.54 12.38 L2.08 11.26 L0.55 11.20 L0.55 9.80 L2.08 9.74 L2.54 8.62 L1.50 7.50 L2.50 6.50 L3.62 7.54 L4.74 7.08 L4.80 5.55 L6.20 5.55 L6.26 7.08 L7.38 7.54 L8.50 6.50 L9.50 7.50 L8.46 8.62 Z" fill="#6258c0" stroke="#3e3690" stroke-width=".5"/><circle cx="5.5" cy="10.5" r="2.300" fill="#8a84d8"/><circle cx="5.5" cy="10.5" r=".9" fill="#b8e030"/></svg></span><span class="t" style="left:86px;letter-spacing:0.136px">TicTacToe</span></div><div class="row" style="top:140px;width:397px"><span class="exp" style="left:7px"></span><span class="ic" style="left:25px"><svg width="16" height="16" viewBox="0 0 16 16"><path d="M1.500 13.500 v-9.500 h4 l1.500 1.500 h6 v2.500" fill="#f8e4a0" stroke="#c8942a"/><path d="M1.500 13.500 l3 -6 h11 l-3 6 z" fill="#f4c454" stroke="#c8942a"/><path d="M9.500 3.500 q2.500 -2.500 5 -1.500 m.3 -1.500 l0 2 l-2 0" fill="none" stroke="#333" stroke-width=".9"/></svg></span><span class="t" style="left:47px;letter-spacing:-0.106px">VEA.Android.TouchExample</span></div><div class="row" style="top:160px;width:397px"><span class="cb" style="left:51px;width:12px;height:12px;background:linear-gradient(135deg,#ececf0,#fff 70%);border-color:#8c8ea0"></span><span class="ic" style="left:66px"><svg width="16" height="16" viewBox="0 0 16 16"><rect x="4.500" y="2.500" width="11" height="9" fill="#f6f8fe" stroke="#8a96c0"/><path d="M6 4.500 h8" stroke="#3a58c8" stroke-width="1.200" stroke-dasharray="2 1"/><path d="M8.92 9.74 L10.45 9.80 L10.45 11.20 L8.92 11.26 L8.46 12.38 L9.50 13.50 L8.50 14.50 L7.38 13.46 L6.26 13.92 L6.20 15.45 L4.80 15.45 L4.74 13.92 L3.62 13.46 L2.50 14.50 L1.50 13.50 L2.54 12.38 L2.08 11.26 L0.55 11.20 L0.55 9.80 L2.08 9.74 L2.54 8.62 L1.50 7.50 L2.50 6.50 L3.62 7.54 L4.74 7.08 L4.80 5.55 L6.20 5.55 L6.26 7.08 L7.38 7.54 L8.50 6.50 L9.50 7.50 L8.46 8.62 Z" fill="#6258c0" stroke="#3e3690" stroke-width=".5"/><circle cx="5.5" cy="10.5" r="2.300" fill="#8a84d8"/><circle cx="5.5" cy="10.5" r=".9" fill="#b8e030"/></svg></span><span class="t" style="left:86px;letter-spacing:-0.124px">TouchExample Local</span></div><div class="row" style="top:180px;width:397px"><span class="exp" style="left:7px"></span><span class="ic" style="left:25px"><svg width="16" height="16" viewBox="0 0 16 16"><path d="M1.500 13.500 v-9.500 h4 l1.500 1.500 h6 v2.500" fill="#f8e4a0" stroke="#c8942a"/><path d="M1.500 13.500 l3 -6 h11 l-3 6 z" fill="#f4c454" stroke="#c8942a"/><path d="M9.500 3.500 q2.500 -2.500 5 -1.500 m.3 -1.500 l0 2 l-2 0" fill="none" stroke="#333" stroke-width=".9"/></svg></span><span class="t" style="left:47px;letter-spacing:-0.319px">VEA.JBoss (Red Hat).HelloWorld</span></div><div class="row" style="top:200px;width:397px"><span class="cb" style="left:51px;width:12px;height:12px;background:linear-gradient(135deg,#ececf0,#fff 70%);border-color:#8c8ea0"></span><span class="ic" style="left:66px"><svg width="16" height="16" viewBox="0 0 16 16"><rect x="4.500" y="2.500" width="11" height="9" fill="#f6f8fe" stroke="#8a96c0"/><path d="M6 4.500 h8" stroke="#3a58c8" stroke-width="1.200" stroke-dasharray="2 1"/><path d="M8.92 9.74 L10.45 9.80 L10.45 11.20 L8.92 11.26 L8.46 12.38 L9.50 13.50 L8.50 14.50 L7.38 13.46 L6.26 13.92 L6.20 15.45 L4.80 15.45 L4.74 13.92 L3.62 13.46 L2.50 14.50 L1.50 13.50 L2.54 12.38 L2.08 11.26 L0.55 11.20 L0.55 9.80 L2.08 9.74 L2.54 8.62 L1.50 7.50 L2.50 6.50 L3.62 7.54 L4.74 7.08 L4.80 5.55 L6.20 5.55 L6.26 7.08 L7.38 7.54 L8.50 6.50 L9.50 7.50 L8.46 8.62 Z" fill="#6258c0" stroke="#3e3690" stroke-width=".5"/><circle cx="5.5" cy="10.5" r="2.300" fill="#8a84d8"/><circle cx="5.5" cy="10.5" r=".9" fill="#b8e030"/></svg></span><span class="t" style="left:86px;letter-spacing:-0.229px">VEA.JBoss , Helloworld - no src paths</span></div><div class="row" style="top:220px;width:397px"><span class="cb" style="left:51px;width:12px;height:12px;background:linear-gradient(135deg,#ececf0,#fff 70%);border-color:#8c8ea0"></span><span class="ic" style="left:66px"><svg width="16" height="16" viewBox="0 0 16 16"><rect x="4.500" y="2.500" width="11" height="9" fill="#f6f8fe" stroke="#8a96c0"/><path d="M6 4.500 h8" stroke="#3a58c8" stroke-width="1.200" stroke-dasharray="2 1"/><path d="M8.92 9.74 L10.45 9.80 L10.45 11.20 L8.92 11.26 L8.46 12.38 L9.50 13.50 L8.50 14.50 L7.38 13.46 L6.26 13.92 L6.20 15.45 L4.80 15.45 L4.74 13.92 L3.62 13.46 L2.50 14.50 L1.50 13.50 L2.54 12.38 L2.08 11.26 L0.55 11.20 L0.55 9.80 L2.08 9.74 L2.54 8.62 L1.50 7.50 L2.50 6.50 L3.62 7.54 L4.74 7.08 L4.80 5.55 L6.20 5.55 L6.26 7.08 L7.38 7.54 L8.50 6.50 L9.50 7.50 L8.46 8.62 Z" fill="#6258c0" stroke="#3e3690" stroke-width=".5"/><circle cx="5.5" cy="10.5" r="2.300" fill="#8a84d8"/><circle cx="5.5" cy="10.5" r=".9" fill="#b8e030"/></svg></span><span class="t" style="left:86px;letter-spacing:-0.23px">VEA.JBoss, HelloWorld - bad src path</span></div><div class="row" style="top:240px;width:397px"><span class="cb" style="left:51px;width:12px;height:12px;background:linear-gradient(135deg,#ececf0,#fff 70%);border-color:#8c8ea0"></span><span class="ic" style="left:66px"><svg width="16" height="16" viewBox="0 0 16 16"><rect x="4.500" y="2.500" width="11" height="9" fill="#f6f8fe" stroke="#8a96c0"/><path d="M6 4.500 h8" stroke="#3a58c8" stroke-width="1.200" stroke-dasharray="2 1"/><path d="M8.92 9.74 L10.45 9.80 L10.45 11.20 L8.92 11.26 L8.46 12.38 L9.50 13.50 L8.50 14.50 L7.38 13.46 L6.26 13.92 L6.20 15.45 L4.80 15.45 L4.74 13.92 L3.62 13.46 L2.50 14.50 L1.50 13.50 L2.54 12.38 L2.08 11.26 L0.55 11.20 L0.55 9.80 L2.08 9.74 L2.54 8.62 L1.50 7.50 L2.50 6.50 L3.62 7.54 L4.74 7.08 L4.80 5.55 L6.20 5.55 L6.26 7.08 L7.38 7.54 L8.50 6.50 L9.50 7.50 L8.46 8.62 Z" fill="#6258c0" stroke="#3e3690" stroke-width=".5"/><circle cx="5.5" cy="10.5" r="2.300" fill="#8a84d8"/><circle cx="5.5" cy="10.5" r=".9" fill="#b8e030"/></svg></span><span class="t" style="left:86px;letter-spacing:-0.218px">VEA.JBoss, HelloWorld - good</span></div><div class="row" style="top:260px;width:397px"><span class="cb" style="left:51px;width:12px;height:12px;background:linear-gradient(135deg,#ececf0,#fff 70%);border-color:#8c8ea0"></span><span class="ic" style="left:66px"><svg width="16" height="16" viewBox="0 0 16 16"><rect x="4.500" y="2.500" width="11" height="9" fill="#f6f8fe" stroke="#8a96c0"/><path d="M6 4.500 h8" stroke="#3a58c8" stroke-width="1.200" stroke-dasharray="2 1"/><path d="M8.92 9.74 L10.45 9.80 L10.45 11.20 L8.92 11.26 L8.46 12.38 L9.50 13.50 L8.50 14.50 L7.38 13.46 L6.26 13.92 L6.20 15.45 L4.80 15.45 L4.74 13.92 L3.62 13.46 L2.50 14.50 L1.50 13.50 L2.54 12.38 L2.08 11.26 L0.55 11.20 L0.55 9.80 L2.08 9.74 L2.54 8.62 L1.50 7.50 L2.50 6.50 L3.62 7.54 L4.74 7.08 L4.80 5.55 L6.20 5.55 L6.26 7.08 L7.38 7.54 L8.50 6.50 L9.50 7.50 L8.46 8.62 Z" fill="#6258c0" stroke="#3e3690" stroke-width=".5"/><circle cx="5.5" cy="10.5" r="2.300" fill="#8a84d8"/><circle cx="5.5" cy="10.5" r=".9" fill="#b8e030"/></svg></span><span class="t" style="left:86px;letter-spacing:-0.354px">VEA.JBoss, HelloWorld JVMTI</span></div><div class="row" style="top:280px;width:397px"><span class="exp" style="left:7px"></span><span class="ic" style="left:25px"><svg width="16" height="16" viewBox="0 0 16 16"><path d="M1.500 13.500 v-9.500 h4 l1.500 1.500 h6 v2.500" fill="#f8e4a0" stroke="#c8942a"/><path d="M1.500 13.500 l3 -6 h11 l-3 6 z" fill="#f4c454" stroke="#c8942a"/><path d="M9.500 3.500 q2.500 -2.500 5 -1.500 m.3 -1.500 l0 2 l-2 0" fill="none" stroke="#333" stroke-width=".9"/></svg></span><span class="t" style="left:47px;letter-spacing:-0.15px">VEA.Windows.Collector</span></div><div class="row" style="top:300px;width:397px"><span class="cb" style="left:51px;width:12px;height:12px;background:linear-gradient(135deg,#ececf0,#fff 70%);border-color:#8c8ea0"></span><span class="ic" style="left:66px"><svg width="16" height="16" viewBox="0 0 16 16"><rect x="4.500" y="2.500" width="11" height="9" fill="#f6f8fe" stroke="#8a96c0"/><path d="M6 4.500 h8" stroke="#3a58c8" stroke-width="1.200" stroke-dasharray="2 1"/><path d="M8.92 9.74 L10.45 9.80 L10.45 11.20 L8.92 11.26 L8.46 12.38 L9.50 13.50 L8.50 14.50 L7.38 13.46 L6.26 13.92 L6.20 15.45 L4.80 15.45 L4.74 13.92 L3.62 13.46 L2.50 14.50 L1.50 13.50 L2.54 12.38 L2.08 11.26 L0.55 11.20 L0.55 9.80 L2.08 9.74 L2.54 8.62 L1.50 7.50 L2.50 6.50 L3.62 7.54 L4.74 7.08 L4.80 5.55 L6.20 5.55 L6.26 7.08 L7.38 7.54 L8.50 6.50 L9.50 7.50 L8.46 8.62 Z" fill="#6258c0" stroke="#3e3690" stroke-width=".5"/><circle cx="5.5" cy="10.5" r="2.300" fill="#8a84d8"/><circle cx="5.5" cy="10.5" r=".9" fill="#b8e030"/></svg></span><span class="t" style="left:86px;letter-spacing:-0.15px">Collector</span></div></div>
 <div class="abs tabbar" style="left:0;top:957px;width:397px;height:23px">
  <span class="abs" style="left:4px;top:2px"><svg width="16" height="16" viewBox="0 0 16 16"><rect x="1.500" y="4.500" width="11" height="10" fill="#eef2ff" stroke="#3a48a8"/><path d="M3 11 l1.500 2 l1.500 -2 M7.500 10.500 l2 2.500 l2.500 -3" stroke="#3a48a8" fill="none"/><path d="M4 6 l6 -4 l4 1 l-6 4 z" fill="#e8c838" stroke="#6a5a10" stroke-width=".7"/><path d="M14.500 1.500 v5" stroke="#111" stroke-width="1.500"/></svg></span><span class="abs" style="left:22px;top:4px;color:#fff;white-space:nowrap;line-height:14px;letter-spacing:-0.369px">Properties</span>
  <div class="abs" style="left:81px;top:0;width:124px;height:20px;background:#fff;border-radius:0 0 3px 3px"><span class="abs" style="left:4px;top:2px"><svg width="16" height="16" viewBox="0 0 16 16"><rect x="4.500" y="2.500" width="11" height="9" fill="#f6f8fe" stroke="#8a96c0"/><path d="M6 4.500 h8" stroke="#3a58c8" stroke-width="1.200" stroke-dasharray="2 1"/><path d="M8.92 9.74 L10.45 9.80 L10.45 11.20 L8.92 11.26 L8.46 12.38 L9.50 13.50 L8.50 14.50 L7.38 13.46 L6.26 13.92 L6.20 15.45 L4.80 15.45 L4.74 13.92 L3.62 13.46 L2.50 14.50 L1.50 13.50 L2.54 12.38 L2.08 11.26 L0.55 11.20 L0.55 9.80 L2.08 9.74 L2.54 8.62 L1.50 7.50 L2.50 6.50 L3.62 7.54 L4.74 7.08 L4.80 5.55 L6.20 5.55 L6.26 7.08 L7.38 7.54 L8.50 6.50 L9.50 7.50 L8.46 8.62 Z" fill="#6258c0" stroke="#3e3690" stroke-width=".5"/><circle cx="5.5" cy="10.5" r="2.300" fill="#8a84d8"/><circle cx="5.5" cy="10.5" r=".9" fill="#b8e030"/></svg></span><span class="abs" style="left:22px;top:4px;white-space:nowrap;line-height:14px;letter-spacing:-0.359px">Execution Analyzer</span></div>
 </div>
</div>
<div id="status"><span class="sttext" style="letter-spacing:-0.421px">Line: 1 Column: 1</span><span class="abs" style="left:12px;top:19px;width:30px;height:30px;border-radius:50%;border:1px solid #1f4a68;background:radial-gradient(circle at 50% 20%,#dfe9ef,#8fb0c4 60%)"></span>
<div class="zoomctl"><svg width="135" height="22" viewBox="0 0 135 22"><circle cx="9.700" cy="11.300" r="6.300" fill="#fff" stroke="#222" stroke-width="1.400"/><rect x="6.200" y="10.400" width="7" height="1.800" fill="#222"/><rect x="26" y="10.5" width="83" height="1.5" fill="#e8e8e8"/><path d="M21.5 4.500 h5 v10 l-2.500 3 l-2.500 -3 z" fill="#e4e4e4" stroke="#999"/><circle cx="126" cy="11.300" r="6.300" fill="#fff" stroke="#222" stroke-width="1.400"/><rect x="122.500" y="10.400" width="7" height="1.800" fill="#222"/><rect x="125.100" y="7.800" width="1.800" height="7" fill="#222"/></svg></div>
<div class="kbd"><span style="left:7.500px">CAP</span><span style="left:46px;color:#fff">NUM</span><span style="left:92px">SCRL</span><span style="left:137px">CLOUD</span></div>
<div class="sizegrip"></div></div>
<div id="dlg" class="abs" style="left:1106px;top:383px;width:718px;height:537px">
 <div class="abs dframe" style="left:0;top:0;width:718px;height:537px"></div>
 <div class="abs dtitle" style="left:2px;top:2px;width:714px;height:27px"></div>
 <div class="abs dglow" style="left:2px;top:2px;width:330px;height:27px"></div>
 <span class="abs" style="left:8px;top:8px"><svg width="16" height="16" viewBox="0 0 16 16"><rect x="1.500" y="4.500" width="11" height="10" fill="#eef2ff" stroke="#3a48a8"/><path d="M3.500 8.500 h7 M3.500 10.500 h7 M3.500 12.500 h7" stroke="#3a48a8"/><path d="M3 6 l6 -4 l4 1 l-6 4 z" fill="#e8c838" stroke="#6a5a10" stroke-width=".7"/><path d="M14.500 1.500 v5" stroke="#111" stroke-width="1.500"/></svg></span>
 <span class="abs" style="left:29px;top:8px;white-space:nowrap;line-height:14px;letter-spacing:-.17px;text-shadow:0 0 6px #fff,0 0 6px #fff">Execution Analyzer: TouchExample Local</span>
 <div class="abs dclose" style="left:664px;top:1px;width:47px;height:19px"><svg width="47" height="19" viewBox="0 0 47 19"><path d="M18.500 5 l9.500 7.500 M28 5 l-9.500 7.500" stroke="#4a2a2a" stroke-width="5" fill="none"/><path d="M19.300 5.600 l7.900 6.300 M27.200 5.600 l-7.900 6.300" stroke="#fff" stroke-width="3" fill="none"/></svg></div>
 <div class="abs" style="left:7px;top:29px;width:704px;height:501px;background:#bcc7d8;border:1px solid #56616f;box-shadow:0 0 0 1px rgba(255,255,255,.75)"></div>
 <div class="abs" style="left:10px;top:32px;width:146px;height:459px;background:#fff"></div>
 <span class="abs dt" style="left:34px;top:34px;letter-spacing:-0.057px">Build</span><span class="abs hdot" style="left:23px;top:41px;width:8px"></span><span class="exp" style="left:18px;top:38px;top:38px;z-index:2"></span><span class="abs dt" style="left:53px;top:52px;letter-spacing:-0.057px">Build</span><span class="abs hdot" style="left:41px;top:59px;width:9px"></span><span class="abs dt" style="left:53px;top:70px;letter-spacing:-0.431px">Clean</span><span class="abs hdot" style="left:41px;top:77px;width:9px"></span><span class="abs dt" style="left:34px;top:88px;letter-spacing:-0.077px">Test</span><span class="abs hdot" style="left:23px;top:95px;width:8px"></span><span class="exp" style="left:18px;top:92px;top:92px;z-index:2"></span><span class="abs dt" style="left:53px;top:106px;letter-spacing:-0.077px">Test</span><span class="abs hdot" style="left:41px;top:113px;width:9px"></span><span class="abs dt" style="left:53px;top:124px;letter-spacing:0.067px">Testpoints</span><span class="abs hdot" style="left:41px;top:131px;width:9px"></span><span class="abs dt" style="left:34px;top:142px;letter-spacing:-0.192px">Debug</span><span class="abs hdot" style="left:23px;top:149px;width:8px"></span><span class="exp" style="left:18px;top:146px;top:146px;z-index:2"></span><span class="abs" style="left:51px;top:159px;width:50px;height:18px;background:#fde8ae;border:1px dotted #222"></span><span class="abs dt" style="left:53px;top:160px;letter-spacing:0.065px;text-decoration:underline">Platform</span><span class="abs hdot" style="left:41px;top:167px;width:9px"></span><span class="abs dt" style="left:53px;top:178px;letter-spacing:-0.086px">Tracepoints</span><span class="abs hdot" style="left:41px;top:185px;width:9px"></span><span class="abs dt" style="left:53px;top:196px;letter-spacing:-0.031px">Workbench</span><span class="abs hdot" style="left:41px;top:203px;width:9px"></span><span class="abs dt" style="left:34px;top:214px;letter-spacing:-0.056px">Intelli-sense</span><span class="abs hdot" style="left:23px;top:221px;width:8px"></span><span class="exp" style="left:18px;top:218px;top:218px;z-index:2"></span><span class="abs dt" style="left:53px;top:232px;letter-spacing:-0.291px">Libraries</span><span class="abs hdot" style="left:41px;top:239px;width:9px"></span><span class="abs dt" style="left:34px;top:250px;letter-spacing:-0.571px">Run</span><span class="abs hdot" style="left:23px;top:257px;width:8px"></span><span class="abs dt" style="left:34px;top:268px;letter-spacing:-0.142px">Deploy</span><span class="abs hdot" style="left:23px;top:275px;width:8px"></span><span class="abs dt" style="left:34px;top:286px;letter-spacing:-0.166px">Recording</span><span class="abs hdot" style="left:23px;top:293px;width:8px"></span><span class="abs dt" style="left:34px;top:304px;letter-spacing:-0.003px">Simulation</span><span class="abs hdot" style="left:23px;top:311px;width:8px"></span><span class="abs vdot" style="left:22px;top:48px;height:263px"></span><span class="abs vdot" style="left:41px;top:48px;height:30px"></span><span class="abs vdot" style="left:41px;top:102px;height:30px"></span><span class="abs vdot" style="left:41px;top:156px;height:48px"></span><span class="abs vdot" style="left:41px;top:228px;height:12px"></span>
 <span class="abs dl" style="left:173px;top:45px;letter-spacing:-0.219px;">Debugger:</span><span class="abs dl" style="left:173px;top:77px;letter-spacing:-0.198px;">Default Directory:</span><span class="abs dl" style="left:173px;top:105px;letter-spacing:-0.186px;">Application Path:</span><span class="abs dl" style="left:173px;top:131px;letter-spacing:-0.475px;">Command Line</span><span class="abs dl" style="left:173px;top:144px;letter-spacing:-0.425px;">Arguments:</span><span class="abs dl" style="left:173px;top:197px;letter-spacing:-0.205px;">Connection</span>
 <div class="abs inp" style="left:278px;top:44px;width:117px;height:21px"><span class="abs dl" style="left:3px;top:4px;letter-spacing:-0.344px">Java (JDWP)</span><span class="abs" style="left:97px;top:1px;width:17px;height:17px;background:#bcc7d8"></span><span class="abs" style="left:102.500px;top:8px;border:3px solid transparent;border-top:3px solid #111;border-bottom:0"></span></div>
 <span class="cb" style="left:407px;top:49px;opacity:.6"></span><span class="abs dl" style="left:422px;top:49px;letter-spacing:-0.112px;color:#8a93a2;text-shadow:1px 1px 0 #fff">x64</span>
 <span class="abs" style="left:504px;top:50px;width:11px;height:11px;border-radius:50%;border:1px solid #6a7484;background:linear-gradient(135deg,#d8dce2,#fff)"><span class="abs" style="left:2px;top:2px;width:5px;height:5px;border-radius:50%;background:radial-gradient(circle at 35% 35%,#8ad0f0,#1a4a8a)"></span></span><span class="abs dl" style="left:519px;top:49px;letter-spacing:-0.493px;">Run</span><span class="abs" style="left:555px;top:50px;width:11px;height:11px;border-radius:50%;border:1px solid #6a7484;background:linear-gradient(135deg,#d8dce2,#fff)"></span><span class="abs dl" style="left:570px;top:49px;letter-spacing:-0.164px;">Attach to process</span>
 <div class="abs inp" style="left:278px;top:71px;width:386px;height:23px"><span class="abs dl" style="left:5px;top:3px;letter-spacing:-0.1px">C:\Android\samples\android-16\CrossCompatibility</span><span class="abs" style="left:363px;top:1px;width:21px;height:19px;background:#bcc7d8"></span><span class="abs dl" style="left:368px;top:3px">...</span></div>
 <div class="abs inp" style="left:278px;top:101px;width:386px;height:23px"><span class="abs dl" style="left:5px;top:3px;letter-spacing:-0.331px">null</span><span class="abs" style="left:363px;top:1px;width:21px;height:19px;background:#bcc7d8"></span><span class="abs dl" style="left:368px;top:3px">...</span></div>
 <div class="abs inp" style="left:278px;top:130px;width:387px;height:23px"></div>
 <span class="cb" style="left:281px;top:166px"></span><span class="abs dl" style="left:296px;top:166px;letter-spacing:-0.431px;">Build first</span><span class="cb" style="left:362px;top:166px"></span><span class="abs dl" style="left:377px;top:166px;letter-spacing:-0.232px;">Show console</span><span class="cb" style="left:464px;top:166px"></span><span class="abs dl" style="left:479px;top:166px;letter-spacing:-0.266px;">Show diagnostic messages</span>
 <div class="abs inp" style="left:172px;top:216px;width:474px;height:253px"><div class="abs dl" style="left:4px;top:3px;line-height:13px;white-space:nowrap"><div style="letter-spacing:0.202px">port:7777</div><div style="letter-spacing:-0.019px">host:localhost</div><div style="letter-spacing:-0.064px">source:C:\Android\samples\android-16\CrossCompatibility\src</div><div style="letter-spacing:-0.017px">timeout:100000</div><div style="letter-spacing:0.223px">output:</div><div style="letter-spacing:0.001px">logging:true</div><div style="letter-spacing:0.001px">platform:android</div></div>
   <div class="abs" style="left:455px;top:0;width:17px;height:251px;background:#f0f0f0"><span class="arr u" style="left:4px;top:7px;border-bottom-color:#999"></span><span class="arr d" style="left:4px;top:240px;border-top-color:#999"></span></div></div>
 <span class="abs dl" style="left:499px;top:506px;letter-spacing:-0.519px;font-size:12px">OK</span><span class="abs dl" style="left:570px;top:506px;letter-spacing:-0.676px;font-size:12px">Cancel</span><span class="abs dl" style="left:655.5px;top:506px;letter-spacing:-0.845px;font-size:12px">Help</span>
</div>

</div></body></html>
